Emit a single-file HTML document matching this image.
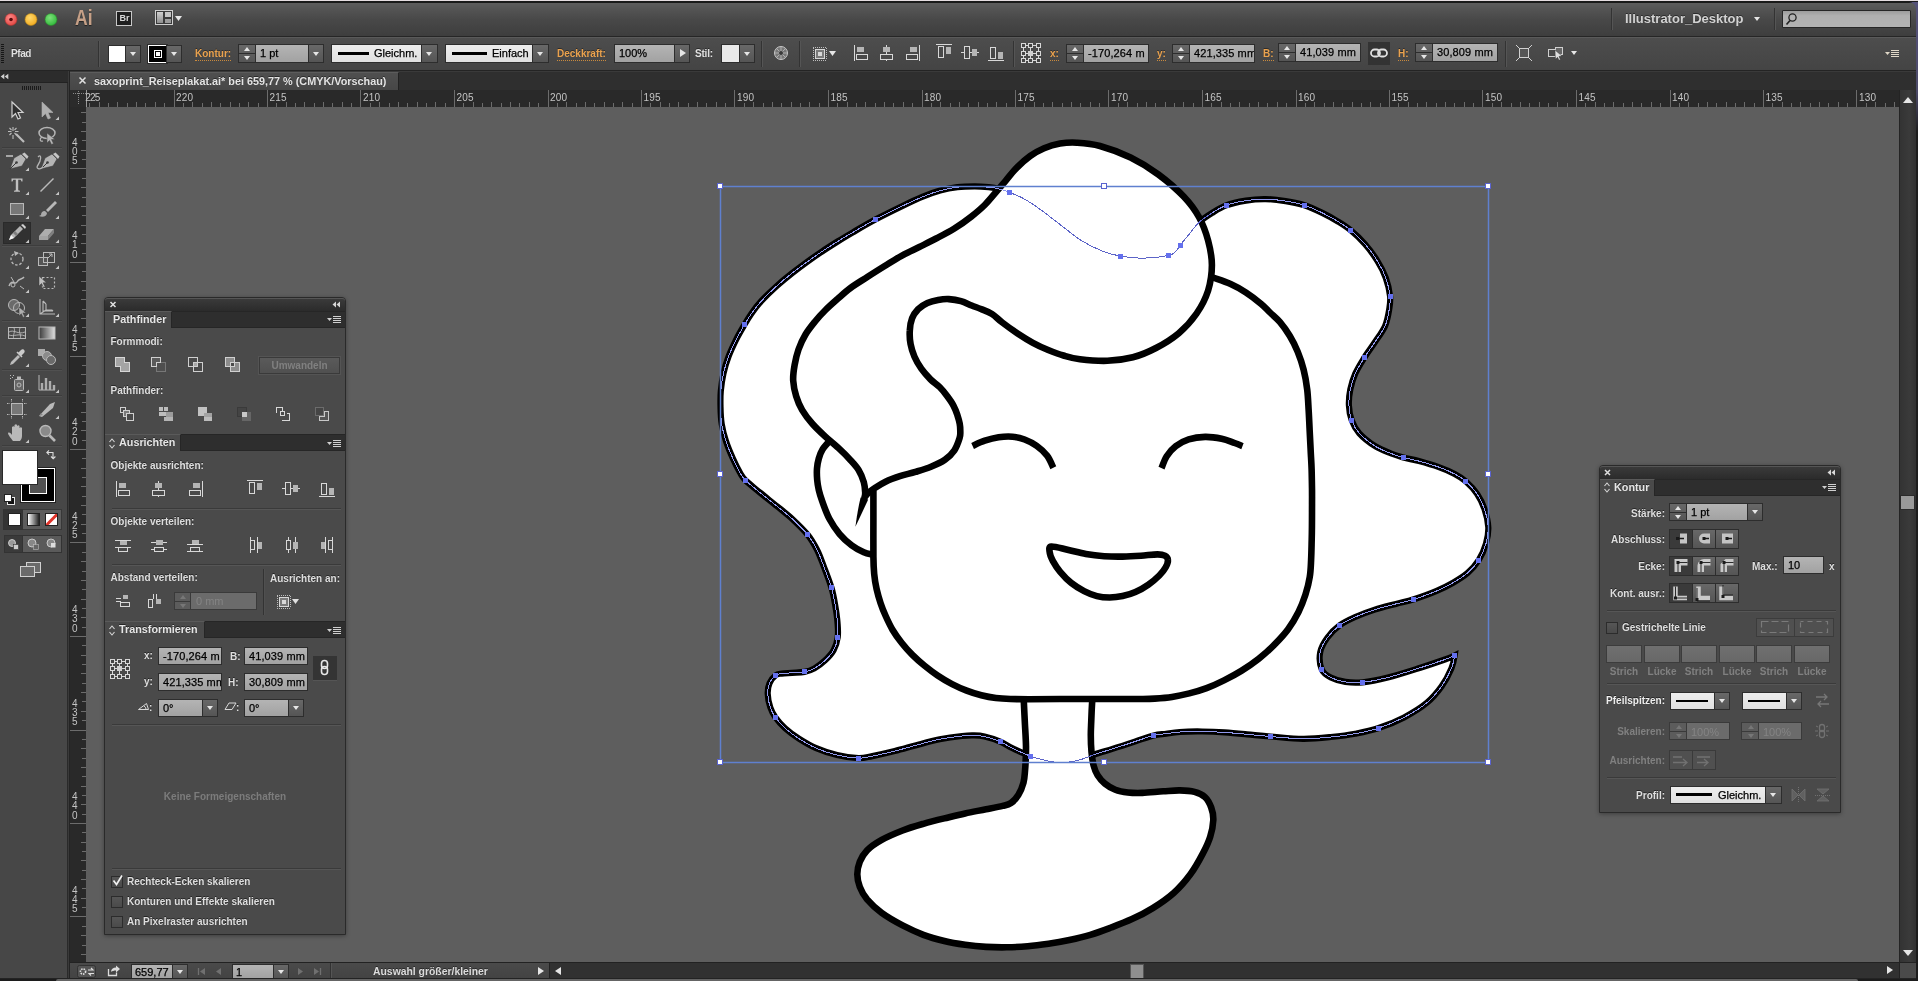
<!DOCTYPE html>
<html lang="de">
<head>
<meta charset="utf-8">
<title>saxoprint_Reiseplakat.ai* bei 659,77 % (CMYK/Vorschau)</title>
<style>
*{box-sizing:border-box;margin:0;padding:0}
html,body{width:1918px;height:981px;overflow:hidden;background:#5e5e5e}
body{position:relative;font-family:"Liberation Sans",sans-serif;font-size:11px;color:#dcdcdc;line-height:1;-webkit-font-smoothing:antialiased}
.abs{position:absolute}
#appbar{position:absolute;left:0;top:0;width:1918px;height:37px;background:linear-gradient(#e4dde0 0,#e4dde0 1px,#1a1a1a 1px,#1a1a1a 3px,#5d5d5d 3px,#555 8px,#484848 55%,#3e3e3e 100%);border-bottom:1px solid #262626}
#ctrl{position:absolute;left:0;top:37px;width:1918px;height:34px;background:linear-gradient(#4d4d4d,#444 100%);border-top:1px solid #5a5a5a;border-bottom:1px solid #242424}
#tabbar{position:absolute;left:70px;top:71px;width:1848px;height:19px;background:#2f2f2f;border-top:1px solid #3a3a3a}
#tab{position:absolute;left:0;top:0;width:329px;height:19px;background:linear-gradient(#4f4f4f,#464646);border-right:1px solid #222;border-top:1px solid #5c5c5c}
#hruler{position:absolute;left:70px;top:90px;width:1829px;height:17px;background:#292929;overflow:hidden}
#vruler{position:absolute;left:70px;top:107px;width:16px;height:855px;background:#292929;overflow:hidden}
#tools{position:absolute;left:0;top:71px;width:67px;height:910px;background:#474747}
#toolgap{position:absolute;left:67px;top:71px;width:3px;height:910px;background:#3a3a3a;border-left:1px solid #2a2a2a;border-right:1px solid #242424}
#canvas{position:absolute;left:86px;top:107px;width:1813px;height:855px;background:#5e5e5e;overflow:hidden}
#vscroll{position:absolute;left:1899px;top:90px;width:17px;height:872px;background:linear-gradient(90deg,#333,#3a3a3a 60%,#303030);border-left:1px solid #242424}
#status{position:absolute;left:70px;top:962px;width:1848px;height:19px;background:#313131;border-top:1px solid #222}
.lbl{position:absolute;white-space:nowrap;text-shadow:0 -1px 0 rgba(0,0,0,.45)}
.o{color:#eaa24e;font-weight:bold;font-size:10px;text-shadow:0 -1px 0 rgba(0,0,0,.4)}
.inp{position:absolute;height:18px;background:linear-gradient(#b4b4b4,#a2a2a2);border:1px solid #2d2d2d;color:#000;font-size:11px;line-height:16px;padding-left:4px;white-space:nowrap;overflow:hidden;text-shadow:none;-webkit-text-stroke:.25px #000}
.btn{position:absolute;height:18px;background:linear-gradient(#686868,#555);border:1px solid #2d2d2d}
.lite{position:absolute;height:18px;background:linear-gradient(#ededed,#e0e0e0);border:1px solid #2d2d2d;color:#000;font-size:11px;line-height:16px;white-space:nowrap;overflow:hidden;text-shadow:none;-webkit-text-stroke:.25px #000}
.tri{position:absolute;width:0;height:0;margin-left:1px;border-left:3px solid transparent;border-right:3px solid transparent;border-top:4px solid #e6e6e6}
.triu{position:absolute;width:0;height:0;margin-left:1px;border-left:3px solid transparent;border-right:3px solid transparent;border-bottom:4px solid #e6e6e6}
.trir{position:absolute;width:0;height:0;border-top:4px solid transparent;border-bottom:4px solid transparent;border-left:6px solid #e6e6e6}
.tril{position:absolute;width:0;height:0;border-top:4px solid transparent;border-bottom:4px solid transparent;border-right:6px solid #e6e6e6}
.vsep{position:absolute;width:2px;border-left:1px solid #333;border-right:1px solid #555}
.panel{position:absolute;background:#4a4a4a;border:1px solid #2a2a2a;box-shadow:0 1px 4px rgba(0,0,0,.35)}
.ptitle{position:absolute;left:0;right:0;height:17px;background:#2e2e2e;border-top:1px solid #262626;border-bottom:1px solid #262626}
.ptab{position:absolute;left:0;top:-1px;height:17px;background:#4a4a4a;border-right:1px solid #262626;border-top:1px solid #5a5a5a;font-weight:bold;font-size:10.800px;line-height:15px;color:#e6e6e6;white-space:nowrap;text-shadow:0 -1px 0 rgba(0,0,0,.5)}
.pl{position:absolute;font-weight:bold;font-size:10px;color:#dedede;white-space:nowrap;text-shadow:0 -1px 0 rgba(0,0,0,.5)}
.hsep{position:absolute;height:2px;border-top:1px solid #3a3a3a;border-bottom:1px solid #565656}
.cb{position:absolute;width:12px;height:12px;background:linear-gradient(#565656,#4a4a4a);border:1px solid #2c2c2c}
svg{position:absolute;overflow:visible}
</style>
</head>
<body>
<div id="root" style="position:absolute;left:0;top:0;width:1918px;height:981px;will-change:transform">
<div id="appbar"></div>
<div id="ctrl"></div>
<div id="tools"></div>
<div id="toolgap"></div>
<div id="tabbar"><div id="tab"></div></div>
<div id="hruler"></div>
<div id="vruler"></div>
<div id="canvas"></div>
<div id="vscroll"></div>
<div id="status"></div>

<!-- app bar text -->
<div class="lbl" style="left:75px;top:7px;font-size:22px;font-weight:bold;color:#c6a087;transform:scaleX(.8);transform-origin:0 0;text-shadow:0 1px 1px rgba(0,0,0,.5)">Ai</div>
<div class="abs" style="left:116px;top:11px;width:16px;height:15px;border:1px solid #c8c8c8;background:#1f1f1f"></div>
<div class="lbl" style="left:119.500px;top:14px;font-size:9px;font-weight:bold;color:#d6d6d6;letter-spacing:0;text-shadow:none">Br</div>
<div class="vsep" style="left:1611px;top:8px;height:22px"></div>
<div class="lbl" style="left:1625px;top:12px;font-size:13px;font-weight:bold;color:#d2d2d2">Illustrator_Desktop</div>
<div class="tri" style="left:1753px;top:17px;border-left-width:3px;border-right-width:3px"></div>
<div class="vsep" style="left:1774px;top:8px;height:22px"></div>
<div class="abs" style="left:1782px;top:10px;width:129px;height:18px;background:linear-gradient(#9c9c9c,#b0b0b0 30%,#b2b2b2);border:1px solid #262626;border-radius:1px"></div>

<!-- control bar text + fields -->
<div class="lbl" style="left:11px;top:49px;font-size:10px;font-weight:bold;letter-spacing:-.4px;color:#e0e0e0">Pfad</div>
<div class="vsep" style="left:98px;top:41px;height:26px"></div>
<div class="abs" style="left:108px;top:45px;width:18px;height:18px;background:#fff;border:1px solid #2d2d2d"></div>
<div class="btn" style="left:125px;top:45px;width:16px"></div><div class="tri" style="left:129px;top:52px"></div>
<div class="abs" style="left:148px;top:45px;width:19px;height:18px;background:#000;border:1px solid #fff;outline:1px solid #2d2d2d"></div>
<div class="abs" style="left:154px;top:50px;width:8px;height:8px;border:1px solid #fff"></div>
<div class="abs" style="left:156px;top:52px;width:4px;height:4px;background:#fff"></div>
<div class="btn" style="left:166px;top:45px;width:16px"></div><div class="tri" style="left:170px;top:52px"></div>

<div class="lbl o" style="left:195px;top:49px;border-bottom:1px dotted #c98a3e;padding-bottom:1px">Kontur:</div>
<div class="btn" style="left:238px;top:44px;width:18px;height:19px"></div>
<div class="abs" style="left:239px;top:53px;width:16px;height:1px;background:#2d2d2d"></div>
<div class="triu" style="left:243px;top:47px"></div><div class="tri" style="left:243px;top:56px"></div>
<div class="inp" style="left:255px;top:44px;width:54px;height:19px">1 pt</div>
<div class="btn" style="left:308px;top:44px;width:16px;height:19px"></div><div class="tri" style="left:312px;top:52px"></div>

<div class="lite" style="left:331px;top:44px;width:91px;height:19px;padding-left:42px">Gleichm.</div>
<div class="abs" style="left:338px;top:52px;width:31px;height:3px;background:#000"></div>
<div class="btn" style="left:421px;top:44px;width:17px;height:19px"></div><div class="tri" style="left:425px;top:52px"></div>
<div class="lite" style="left:445px;top:44px;width:88px;height:19px;padding-left:46px">Einfach</div>
<div class="abs" style="left:452px;top:52px;width:35px;height:3px;background:#000"></div>
<div class="btn" style="left:532px;top:44px;width:17px;height:19px"></div><div class="tri" style="left:536px;top:52px"></div>

<div class="lbl o" style="left:557px;top:49px;border-bottom:1px dotted #c98a3e;padding-bottom:1px">Deckkraft:</div>
<div class="inp" style="left:614px;top:44px;width:61px;height:19px">100%</div>
<div class="btn" style="left:674px;top:44px;width:16px;height:19px"></div><div class="trir" style="left:680px;top:49px"></div>
<div class="lbl" style="left:695px;top:49px;font-size:10px;font-weight:bold;letter-spacing:-.2px;color:#e0e0e0">Stil:</div>
<div class="abs" style="left:721px;top:44px;width:19px;height:19px;background:#e9e9e9;border:1px solid #2d2d2d"></div>
<div class="btn" style="left:739px;top:44px;width:16px;height:19px"></div><div class="tri" style="left:743px;top:52px"></div>
<div class="vsep" style="left:761px;top:41px;height:26px"></div>
<div class="vsep" style="left:799px;top:41px;height:26px"></div>
<div class="vsep" style="left:1013px;top:41px;height:26px"></div>

<div class="lbl o" style="left:1050px;top:49px;border-bottom:1px dotted #c98a3e;padding-bottom:1px">x:</div>
<div class="btn" style="left:1066px;top:44px;width:18px;height:19px"></div>
<div class="abs" style="left:1067px;top:53px;width:16px;height:1px;background:#2d2d2d"></div>
<div class="triu" style="left:1071px;top:47px"></div><div class="tri" style="left:1071px;top:56px"></div>
<div class="inp" style="left:1083px;top:44px;width:66px;height:19px;letter-spacing:.1px">-170,264 m</div>
<div class="lbl o" style="left:1157px;top:49px;border-bottom:1px dotted #c98a3e;padding-bottom:1px">y:</div>
<div class="btn" style="left:1172px;top:44px;width:18px;height:19px"></div>
<div class="abs" style="left:1173px;top:53px;width:16px;height:1px;background:#2d2d2d"></div>
<div class="triu" style="left:1177px;top:47px"></div><div class="tri" style="left:1177px;top:56px"></div>
<div class="inp" style="left:1189px;top:44px;width:66px;height:19px;letter-spacing:.1px">421,335 mm</div>
<div class="lbl o" style="left:1263px;top:49px;border-bottom:1px dotted #c98a3e;padding-bottom:1px">B:</div>
<div class="btn" style="left:1278px;top:43px;width:18px;height:19px"></div>
<div class="abs" style="left:1279px;top:52px;width:16px;height:1px;background:#2d2d2d"></div>
<div class="triu" style="left:1283px;top:46px"></div><div class="tri" style="left:1283px;top:55px"></div>
<div class="inp" style="left:1295px;top:43px;width:66px;height:19px;letter-spacing:.1px">41,039 mm</div>
<div class="abs" style="left:1368px;top:42px;width:22px;height:23px;background:#333"></div>
<div class="lbl o" style="left:1398px;top:49px;border-bottom:1px dotted #c98a3e;padding-bottom:1px">H:</div>
<div class="btn" style="left:1415px;top:43px;width:18px;height:19px"></div>
<div class="abs" style="left:1416px;top:52px;width:16px;height:1px;background:#2d2d2d"></div>
<div class="triu" style="left:1420px;top:46px"></div><div class="tri" style="left:1420px;top:55px"></div>
<div class="inp" style="left:1432px;top:43px;width:66px;height:19px;letter-spacing:.1px">30,809 mm</div>
<div class="vsep" style="left:1505px;top:41px;height:26px"></div>
<div class="tri" style="left:1570px;top:51px"></div>

<!-- tab -->
<div class="lbl" style="left:94px;top:76px;font-size:11px;font-weight:bold;color:#e4e4e4;transform:scaleX(.985);transform-origin:0 0">saxoprint_Reiseplakat.ai* bei 659,77 % (CMYK/Vorschau)</div>
<svg class="abs" style="left:0;top:0" width="1918" height="981" viewBox="0 0 1918 981">
<g shape-rendering="crispEdges">
<rect x="70" y="90" width="16" height="17" fill="#2b2b2b"/>
<path d="M72.5 93.5H86 M78.5 91V105" stroke="#8a8a8a" stroke-width="1" stroke-dasharray="1 1" fill="none"/>
<path d="M89.5 103V107 M99.5 102V107 M108.5 103V107 M117.5 102V107 M127.5 103V107 M136.5 102V107 M145.5 103V107 M155.5 102V107 M164.5 103V107 M174.5 90V107 M183.5 103V107 M192.5 102V107 M202.5 103V107 M211.5 102V107 M220.5 103V107 M230.5 102V107 M239.5 103V107 M248.5 102V107 M258.5 103V107 M267.5 90V107 M276.5 103V107 M286.5 102V107 M295.5 103V107 M304.5 102V107 M314.5 103V107 M323.5 102V107 M332.5 103V107 M342.5 102V107 M351.5 103V107 M360.5 90V107 M370.5 103V107 M379.5 102V107 M389.5 103V107 M398.5 102V107 M407.5 103V107 M417.5 102V107 M426.5 103V107 M435.5 102V107 M445.5 103V107 M454.5 90V107 M463.5 103V107 M473.5 102V107 M482.5 103V107 M491.5 102V107 M501.5 103V107 M510.5 102V107 M519.5 103V107 M529.5 102V107 M538.5 103V107 M548.5 90V107 M557.5 103V107 M566.5 102V107 M576.5 103V107 M585.5 102V107 M594.5 103V107 M604.5 102V107 M613.5 103V107 M622.5 102V107 M632.5 103V107 M641.5 90V107 M650.5 103V107 M660.5 102V107 M669.5 103V107 M678.5 102V107 M688.5 103V107 M697.5 102V107 M706.5 103V107 M716.5 102V107 M725.5 103V107 M734.5 90V107 M744.5 103V107 M753.5 102V107 M763.5 103V107 M772.5 102V107 M781.5 103V107 M791.5 102V107 M800.5 103V107 M809.5 102V107 M819.5 103V107 M828.5 90V107 M837.5 103V107 M847.5 102V107 M856.5 103V107 M865.5 102V107 M875.5 103V107 M884.5 102V107 M893.5 103V107 M903.5 102V107 M912.5 103V107 M922.5 90V107 M931.5 103V107 M940.5 102V107 M950.5 103V107 M959.5 102V107 M968.5 103V107 M978.5 102V107 M987.5 103V107 M996.5 102V107 M1006.5 103V107 M1015.5 90V107 M1024.5 103V107 M1034.5 102V107 M1043.5 103V107 M1052.5 102V107 M1062.5 103V107 M1071.5 102V107 M1080.5 103V107 M1090.5 102V107 M1099.5 103V107 M1108.5 90V107 M1118.5 103V107 M1127.5 102V107 M1137.5 103V107 M1146.5 102V107 M1155.5 103V107 M1165.5 102V107 M1174.5 103V107 M1183.5 102V107 M1193.5 103V107 M1202.5 90V107 M1211.5 103V107 M1221.5 102V107 M1230.5 103V107 M1239.5 102V107 M1249.5 103V107 M1258.5 102V107 M1267.5 103V107 M1277.5 102V107 M1286.5 103V107 M1296.5 90V107 M1305.5 103V107 M1314.5 102V107 M1324.5 103V107 M1333.5 102V107 M1342.5 103V107 M1352.5 102V107 M1361.5 103V107 M1370.5 102V107 M1380.5 103V107 M1389.5 90V107 M1398.5 103V107 M1408.5 102V107 M1417.5 103V107 M1426.5 102V107 M1436.5 103V107 M1445.5 102V107 M1454.5 103V107 M1464.5 102V107 M1473.5 103V107 M1482.5 90V107 M1492.5 103V107 M1501.5 102V107 M1511.5 103V107 M1520.5 102V107 M1529.5 103V107 M1539.5 102V107 M1548.5 103V107 M1557.5 102V107 M1567.5 103V107 M1576.5 90V107 M1585.5 103V107 M1595.5 102V107 M1604.5 103V107 M1613.5 102V107 M1623.5 103V107 M1632.5 102V107 M1641.5 103V107 M1651.5 102V107 M1660.5 103V107 M1670.5 90V107 M1679.5 103V107 M1688.5 102V107 M1698.5 103V107 M1707.5 102V107 M1716.5 103V107 M1726.5 102V107 M1735.5 103V107 M1744.5 102V107 M1754.5 103V107 M1763.5 90V107 M1772.5 103V107 M1782.5 102V107 M1791.5 103V107 M1800.5 102V107 M1810.5 103V107 M1819.5 102V107 M1828.5 103V107 M1838.5 102V107 M1847.5 103V107 M1856.5 90V107 M1866.5 103V107 M1875.5 102V107 M1885.5 103V107 M1894.5 102V107" stroke="#6c6c6c" stroke-width="1" fill="none"/>
<path d="M86.5 90V107" stroke="#9a9a9a" stroke-width="1"/>
<path d="M81 112.5H86 M82 122.5H86 M81 131.5H86 M82 140.5H86 M81 150.5H86 M82 159.5H86 M70 168.5H86 M82 178.5H86 M81 187.5H86 M82 197.5H86 M81 206.5H86 M82 215.5H86 M81 225.5H86 M82 234.5H86 M81 243.5H86 M82 253.5H86 M70 262.5H86 M82 271.5H86 M81 281.5H86 M82 290.5H86 M81 299.5H86 M82 309.5H86 M81 318.5H86 M82 327.5H86 M81 337.5H86 M82 346.5H86 M70 356.5H86 M82 365.5H86 M81 374.5H86 M82 384.5H86 M81 393.5H86 M82 402.5H86 M81 412.5H86 M82 421.5H86 M81 430.5H86 M82 440.5H86 M70 449.5H86 M82 458.5H86 M81 468.5H86 M82 477.5H86 M81 486.5H86 M82 496.5H86 M81 505.5H86 M82 514.5H86 M81 524.5H86 M82 533.5H86 M70 542.5H86 M82 552.5H86 M81 561.5H86 M82 571.5H86 M81 580.5H86 M82 589.5H86 M81 599.5H86 M82 608.5H86 M81 617.5H86 M82 627.5H86 M70 636.5H86 M82 645.5H86 M81 655.5H86 M82 664.5H86 M81 673.5H86 M82 683.5H86 M81 692.5H86 M82 701.5H86 M81 711.5H86 M82 720.5H86 M70 730.5H86 M82 739.5H86 M81 748.5H86 M82 758.5H86 M81 767.5H86 M82 776.5H86 M81 786.5H86 M82 795.5H86 M81 804.5H86 M82 814.5H86 M70 823.5H86 M82 832.5H86 M81 842.5H86 M82 851.5H86 M81 860.5H86 M82 870.5H86 M81 879.5H86 M82 888.5H86 M81 898.5H86 M82 907.5H86 M70 916.5H86 M82 926.5H86 M81 935.5H86 M82 945.5H86 M81 954.5H86" stroke="#6c6c6c" stroke-width="1" fill="none"/>
</g>
<g font-family="Liberation Sans, sans-serif" font-size="10" fill="#c4c4c4">
<clipPath id="hrc"><rect x="87" y="90" width="1812" height="17"/></clipPath>
<g clip-path="url(#hrc)">
</g><text x="85.3" y="101" textLength="15" lengthAdjust="spacing">225</text><g clip-path="url(#hrc)">
<text x="176.0" y="101" textLength="17" lengthAdjust="spacing">220</text>
<text x="269.5" y="101" textLength="17" lengthAdjust="spacing">215</text>
<text x="363.0" y="101" textLength="17" lengthAdjust="spacing">210</text>
<text x="456.5" y="101" textLength="17" lengthAdjust="spacing">205</text>
<text x="550.0" y="101" textLength="17" lengthAdjust="spacing">200</text>
<text x="643.5" y="101" textLength="17" lengthAdjust="spacing">195</text>
<text x="737.0" y="101" textLength="17" lengthAdjust="spacing">190</text>
<text x="830.5" y="101" textLength="17" lengthAdjust="spacing">185</text>
<text x="924.0" y="101" textLength="17" lengthAdjust="spacing">180</text>
<text x="1017.5" y="101" textLength="17" lengthAdjust="spacing">175</text>
<text x="1111.0" y="101" textLength="17" lengthAdjust="spacing">170</text>
<text x="1204.5" y="101" textLength="17" lengthAdjust="spacing">165</text>
<text x="1298.0" y="101" textLength="17" lengthAdjust="spacing">160</text>
<text x="1391.5" y="101" textLength="17" lengthAdjust="spacing">155</text>
<text x="1485.0" y="101" textLength="17" lengthAdjust="spacing">150</text>
<text x="1578.5" y="101" textLength="17" lengthAdjust="spacing">145</text>
<text x="1672.0" y="101" textLength="17" lengthAdjust="spacing">140</text>
<text x="1765.5" y="101" textLength="17" lengthAdjust="spacing">135</text>
<text x="1859.0" y="101" textLength="17" lengthAdjust="spacing">130</text>
</g>
<text x="74.8" y="145.6" text-anchor="middle">4</text>
<text x="74.8" y="154.9" text-anchor="middle">0</text>
<text x="74.8" y="164.2" text-anchor="middle">5</text>
<text x="74.8" y="239.1" text-anchor="middle">4</text>
<text x="74.8" y="248.4" text-anchor="middle">1</text>
<text x="74.8" y="257.7" text-anchor="middle">0</text>
<text x="74.8" y="332.6" text-anchor="middle">4</text>
<text x="74.8" y="341.9" text-anchor="middle">1</text>
<text x="74.8" y="351.2" text-anchor="middle">5</text>
<text x="74.8" y="426.1" text-anchor="middle">4</text>
<text x="74.8" y="435.4" text-anchor="middle">2</text>
<text x="74.8" y="444.7" text-anchor="middle">0</text>
<text x="74.8" y="519.6" text-anchor="middle">4</text>
<text x="74.8" y="528.9" text-anchor="middle">2</text>
<text x="74.8" y="538.2" text-anchor="middle">5</text>
<text x="74.8" y="613.1" text-anchor="middle">4</text>
<text x="74.8" y="622.4" text-anchor="middle">3</text>
<text x="74.8" y="631.7" text-anchor="middle">0</text>
<text x="74.8" y="706.6" text-anchor="middle">4</text>
<text x="74.8" y="715.9" text-anchor="middle">3</text>
<text x="74.8" y="725.2" text-anchor="middle">5</text>
<text x="74.8" y="800.1" text-anchor="middle">4</text>
<text x="74.8" y="809.4" text-anchor="middle">4</text>
<text x="74.8" y="818.7" text-anchor="middle">0</text>
<text x="74.8" y="893.6" text-anchor="middle">4</text>
<text x="74.8" y="902.9" text-anchor="middle">4</text>
<text x="74.8" y="912.2" text-anchor="middle">5</text>
</g>
</svg>
<svg class="abs" style="left:0;top:0" width="1918" height="981" viewBox="0 0 1918 981">
<clipPath id="cv"><rect x="86" y="107" width="1813" height="855"/></clipPath>
<g clip-path="url(#cv)" fill="#fff" stroke="#000" stroke-width="6.6" stroke-linejoin="round">
<path d="M1009.4 192.4C1013.4 194.0 1018.1 195.5 1023.3 198.4C1028.5 201.3 1034.5 205.3 1040.6 209.7C1046.7 214.0 1053.1 219.3 1060.0 224.5C1066.9 229.7 1074.9 236.5 1081.9 240.9C1089.0 245.3 1095.9 248.5 1102.3 251.0C1108.7 253.5 1113.4 254.9 1120.2 256.1C1127.0 257.3 1135.0 258.3 1143.1 258.2C1151.2 258.1 1163.1 256.6 1168.6 255.4C1174.1 254.2 1174.3 252.7 1176.2 251.0C1178.1 249.3 1177.9 248.2 1180.0 245.4C1182.1 242.7 1185.8 238.4 1189.0 234.5C1192.2 230.6 1195.3 225.8 1199.2 222.2C1203.1 218.6 1207.7 215.7 1212.2 212.9C1216.7 210.1 1220.5 207.5 1226.1 205.4C1231.7 203.3 1239.3 201.7 1245.9 200.6C1252.5 199.5 1259.1 199.0 1265.7 199.1C1272.3 199.2 1279.1 200.1 1285.6 201.1C1292.0 202.1 1298.3 203.2 1304.4 205.2C1310.5 207.2 1316.8 210.2 1322.3 212.9C1327.8 215.6 1332.9 218.4 1337.6 221.3C1342.3 224.2 1346.0 226.4 1350.6 230.2C1355.2 234.0 1360.6 239.1 1365.1 244.2C1369.6 249.3 1374.0 255.4 1377.4 261.0C1380.9 266.6 1383.7 272.0 1385.8 277.9C1387.9 283.8 1389.5 291.1 1390.1 296.5C1390.6 301.9 1389.9 305.1 1389.1 310.0C1388.3 314.9 1387.4 320.6 1385.1 325.9C1382.8 331.2 1378.7 336.5 1375.2 341.8C1371.7 347.1 1367.6 352.4 1364.3 357.7C1361.0 363.0 1357.6 368.3 1355.3 373.6C1353.0 378.9 1351.4 384.2 1350.3 389.5C1349.2 394.8 1348.7 400.3 1348.9 405.4C1349.1 410.5 1350.0 415.6 1351.7 420.3C1353.4 425.0 1355.4 429.0 1359.3 433.3C1363.2 437.6 1369.9 442.8 1375.2 446.2C1380.5 449.6 1386.4 451.6 1391.1 453.5C1395.8 455.4 1398.8 456.2 1403.4 457.5C1408.0 458.8 1413.0 459.5 1418.9 461.1C1424.8 462.7 1432.8 465.0 1438.8 467.1C1444.8 469.2 1450.2 471.6 1454.7 474.0C1459.2 476.4 1462.0 478.0 1465.7 481.3C1469.4 484.6 1473.9 489.2 1477.0 493.8C1480.1 498.4 1482.6 503.4 1484.5 509.0C1486.4 514.6 1488.0 521.5 1488.3 527.3C1488.5 533.1 1487.6 538.1 1486.0 543.6C1484.4 549.1 1481.8 555.3 1478.7 560.2C1475.7 565.1 1472.0 569.1 1467.7 572.9C1463.4 576.6 1458.3 579.7 1453.1 582.7C1447.9 585.7 1443.2 588.1 1436.7 590.9C1430.2 593.7 1420.7 597.1 1413.9 599.3C1407.1 601.5 1402.5 602.2 1396.0 603.9C1389.5 605.6 1381.6 607.4 1374.8 609.6C1368.0 611.8 1361.0 614.4 1355.2 617.0C1349.4 619.6 1344.3 621.9 1339.7 625.3C1335.1 628.7 1330.8 633.0 1327.5 637.5C1324.2 642.0 1321.2 646.9 1320.2 652.2C1319.2 657.6 1320.0 665.4 1321.8 669.6C1323.6 673.8 1326.9 675.5 1330.8 677.5C1334.7 679.5 1340.1 681.1 1345.4 681.9C1350.7 682.7 1355.5 683.0 1362.6 682.3C1369.7 681.6 1378.2 679.9 1387.8 677.5C1397.4 675.1 1410.9 670.7 1420.4 667.7C1429.9 664.7 1439.2 661.5 1444.9 659.5C1450.6 657.5 1454.7 655.4 1454.7 655.4C1454.7 655.4 1453.6 663.3 1451.4 668.5C1449.2 673.7 1445.7 680.7 1441.6 686.4C1437.5 692.1 1433.2 697.5 1427.0 702.7C1420.8 707.9 1412.3 713.1 1404.1 717.4C1395.9 721.7 1386.2 725.6 1378.0 728.3C1369.8 731.0 1363.1 732.2 1355.2 733.7C1347.3 735.2 1339.5 736.1 1330.8 737.0C1322.1 737.9 1313.1 738.9 1303.0 738.8C1292.9 738.7 1279.6 737.2 1270.3 736.5C1261.0 735.8 1254.6 735.0 1247.0 734.3C1239.4 733.6 1232.0 732.9 1224.5 732.4C1217.0 731.9 1209.6 731.6 1202.1 731.5C1194.6 731.4 1185.7 731.6 1179.7 732.0C1173.7 732.4 1170.5 733.1 1166.2 733.7C1161.9 734.3 1158.9 734.1 1153.7 735.4C1148.5 736.7 1141.7 739.4 1134.8 741.6C1127.9 743.9 1119.1 746.8 1112.4 748.9C1105.7 751.0 1099.7 752.7 1094.5 754.5C1089.3 756.3 1085.6 758.2 1081.0 759.5C1076.4 760.8 1071.0 761.8 1067.0 762.3C1063.0 762.8 1060.5 762.7 1057.0 762.4C1053.5 762.1 1050.7 761.6 1046.2 760.6C1041.8 759.6 1035.9 758.2 1030.3 756.1C1024.7 754.0 1017.6 750.7 1012.6 748.3C1007.6 745.9 1004.9 743.6 1000.2 741.6C995.5 739.6 989.0 737.5 984.5 736.5C980.0 735.5 977.0 735.5 973.3 735.4C969.6 735.3 967.7 735.4 962.1 736.0C956.5 736.6 947.2 737.8 939.7 739.3C932.2 740.8 924.8 742.9 917.3 744.9C909.8 746.9 902.3 749.2 894.8 751.1C887.3 753.0 878.5 754.9 872.4 756.1C866.3 757.3 864.3 758.4 858.4 758.2C852.5 758.0 844.0 756.8 837.0 755.1C830.0 753.4 822.6 751.0 816.2 748.2C809.9 745.5 804.1 741.9 798.9 738.6C793.7 735.3 789.0 731.7 785.1 728.2C781.2 724.7 778.0 721.0 775.5 717.5C773.0 714.0 771.6 711.4 770.3 707.4C769.0 703.4 767.8 697.6 767.7 693.6C767.6 689.6 768.2 686.2 769.5 683.2C770.8 680.2 773.5 677.0 775.5 675.4C777.5 673.8 778.9 674.0 781.6 673.6C784.4 673.2 788.2 673.1 792.0 672.8C795.8 672.5 800.8 672.6 804.5 671.9C808.2 671.2 811.1 670.3 814.5 668.4C817.9 666.5 821.7 663.6 824.9 660.6C828.1 657.6 831.5 654.2 833.6 650.3C835.7 646.4 837.1 641.9 837.7 637.3C838.4 632.7 837.9 627.9 837.5 622.5C837.1 617.1 836.2 611.0 835.2 605.2C834.2 599.4 833.3 593.9 831.4 587.5C829.5 581.1 826.4 573.3 824.0 567.0C821.6 560.7 819.8 555.1 817.0 549.7C814.2 544.3 811.5 539.5 807.5 534.5C803.5 529.5 797.8 524.1 792.8 519.4C787.8 514.7 782.7 510.9 777.2 506.4C771.7 501.9 765.2 496.9 759.9 492.5C754.6 488.1 748.7 483.6 745.4 480.3C742.1 477.0 742.0 476.1 739.9 472.5C737.8 468.9 735.2 463.8 732.9 458.6C730.6 453.4 727.9 447.1 726.0 441.3C724.1 435.5 722.6 429.8 721.7 424.0C720.8 418.2 720.6 412.1 720.5 406.6C720.4 401.1 720.3 396.5 720.8 391.0C721.3 385.5 722.1 379.5 723.4 373.7C724.7 367.9 726.4 362.2 728.6 356.4C730.8 350.6 733.7 344.5 736.4 339.1C739.1 333.8 742.2 328.6 744.7 324.3C747.2 320.0 748.8 317.4 751.5 313.5C754.2 309.6 757.0 305.8 761.2 301.2C765.4 296.6 771.4 290.8 776.5 286.2C781.6 281.6 786.6 277.5 791.7 273.5C796.8 269.5 801.9 265.7 807.0 262.0C812.1 258.3 817.2 254.7 822.3 251.3C827.4 247.9 832.5 244.7 837.6 241.5C842.7 238.3 846.6 236.0 852.9 232.3C859.2 228.6 867.2 223.8 875.4 219.5C883.6 215.2 894.1 210.0 902.0 206.2C909.9 202.4 916.4 199.3 922.8 196.7C929.1 194.1 934.3 192.2 940.1 190.6C945.9 189.0 951.6 187.9 957.4 187.2C963.2 186.5 969.6 186.4 974.8 186.4C980.0 186.4 984.6 186.8 988.6 187.2C992.6 187.6 995.5 188.0 999.0 188.9C1002.5 189.8 1005.4 190.8 1009.4 192.4Z" stroke-width="6.2" stroke-linejoin="miter"/>
<path d="M1023.8 701.0C1024.0 704.8 1024.5 716.1 1024.9 723.6C1025.3 731.1 1025.9 739.7 1026.0 746.1C1026.1 752.5 1025.8 757.9 1025.6 762.0C1025.4 766.1 1025.3 767.6 1025.0 771.0C1024.7 774.4 1024.6 778.5 1023.5 782.5C1022.4 786.5 1020.4 791.6 1018.3 795.0C1016.2 798.4 1013.6 801.2 1011.0 803.0C1008.4 804.8 1006.9 804.9 1002.7 805.9C998.5 806.9 992.3 808.0 986.0 809.2C979.7 810.5 972.1 811.9 965.1 813.4C958.1 814.9 951.2 816.7 944.3 818.4C937.3 820.1 930.3 821.8 923.4 823.8C916.5 825.8 909.5 827.8 902.6 830.5C895.7 833.2 887.6 836.6 881.7 839.9C875.8 843.2 870.8 846.6 867.1 850.3C863.5 853.9 861.4 857.8 859.8 861.8C858.2 865.8 857.3 870.1 857.3 874.3C857.3 878.5 858.2 882.6 859.8 886.8C861.4 891.0 863.5 894.9 867.1 899.3C870.8 903.6 875.8 908.5 881.7 912.9C887.6 917.2 895.7 921.8 902.6 925.4C909.5 929.0 916.5 932.2 923.4 934.8C930.3 937.4 937.3 939.3 944.3 941.0C951.2 942.7 958.1 943.8 965.1 944.8C972.1 945.8 979.0 946.5 986.0 946.9C993.0 947.3 999.8 947.4 1006.8 947.3C1013.8 947.2 1020.8 946.8 1027.7 946.2C1034.7 945.6 1041.5 944.7 1048.5 943.7C1055.5 942.7 1062.4 941.5 1069.4 940.0C1076.4 938.5 1083.3 936.9 1090.3 934.8C1097.2 932.7 1104.1 930.1 1111.1 927.5C1118.0 924.9 1125.0 922.3 1132.0 919.1C1139.0 915.9 1145.8 912.5 1152.8 908.1C1159.8 903.8 1167.4 898.6 1173.7 893.0C1180.0 887.4 1185.5 880.9 1190.4 874.3C1195.3 867.7 1199.6 859.7 1202.9 853.4C1206.2 847.1 1208.5 842.2 1210.2 836.7C1211.9 831.2 1213.1 825.0 1213.3 820.1C1213.5 815.2 1212.6 811.3 1211.2 807.5C1209.8 803.7 1207.8 799.7 1205.0 797.1C1202.2 794.5 1198.7 793.0 1194.5 791.9C1190.3 790.8 1185.1 790.5 1179.9 790.4C1174.7 790.3 1169.5 790.9 1163.3 791.3C1157.0 791.7 1148.3 792.7 1142.4 792.9C1136.5 793.1 1132.3 793.0 1127.8 792.5C1123.3 792.0 1119.1 791.3 1115.3 789.8C1111.5 788.3 1107.9 786.0 1104.9 783.6C1102.0 781.2 1099.5 778.2 1097.6 775.2C1095.7 772.2 1094.6 769.4 1093.6 765.5C1092.6 761.6 1092.0 757.1 1091.5 752.0C1091.0 746.9 1090.8 740.3 1090.8 735.0C1090.8 729.7 1091.1 725.7 1091.3 720.0C1091.5 714.3 1092.0 704.2 1092.2 701.0"/>
<path d="M829.5 441.0C828.3 442.4 824.3 446.6 822.5 449.5C820.7 452.4 819.7 455.3 818.8 458.5C817.9 461.7 817.3 464.9 817.0 468.5C816.7 472.1 816.9 476.4 817.2 480.0C817.5 483.6 818.0 486.5 818.8 490.0C819.6 493.5 820.5 496.4 822.2 501.2C823.9 505.9 826.3 513.0 829.2 518.5C832.1 524.0 835.9 529.6 839.6 534.1C843.4 538.6 847.7 542.4 851.7 545.4C855.7 548.4 860.3 550.8 863.8 552.3C867.3 553.8 871.0 554.2 872.5 554.6"/>
<path d="M1213.0 277.5C1215.9 278.6 1225.1 281.5 1230.6 284.0C1236.1 286.5 1240.8 289.1 1245.9 292.4C1251.0 295.7 1257.2 300.5 1261.2 303.9C1265.2 307.2 1266.9 309.5 1270.0 312.5C1273.1 315.5 1276.5 318.0 1279.8 321.9C1283.1 325.8 1286.7 330.8 1289.7 335.8C1292.7 340.8 1295.4 346.1 1297.7 351.7C1300.0 357.3 1302.0 363.3 1303.6 369.6C1305.2 375.9 1306.4 382.9 1307.2 389.5C1308.0 396.1 1308.2 402.8 1308.6 409.4C1309.0 416.0 1309.3 422.7 1309.6 429.3C1309.9 435.9 1310.3 442.6 1310.6 449.2C1310.9 455.8 1311.4 462.4 1311.6 469.0C1311.8 475.6 1311.9 481.6 1312.0 488.9C1312.1 496.2 1312.0 504.1 1312.0 512.6C1312.0 521.1 1311.9 532.1 1311.7 540.0C1311.5 547.9 1311.4 553.8 1311.1 560.0C1310.8 566.2 1310.7 571.5 1309.7 577.3C1308.8 583.1 1307.3 588.9 1305.4 594.7C1303.5 600.5 1301.4 606.2 1298.5 612.0C1295.6 617.8 1292.1 623.8 1288.1 629.3C1284.0 634.8 1279.1 640.0 1274.2 644.9C1269.3 649.8 1264.1 654.5 1258.6 658.8C1253.1 663.1 1247.1 667.3 1241.3 670.9C1235.5 674.5 1229.8 677.5 1224.0 680.4C1218.2 683.3 1212.4 686.0 1206.6 688.2C1200.8 690.4 1195.1 692.0 1189.3 693.4C1183.5 694.8 1177.8 696.0 1172.0 696.9C1166.2 697.8 1160.5 698.2 1154.7 698.6C1148.9 699.0 1146.4 698.9 1137.3 699.0C1128.2 699.1 1112.9 699.0 1100.0 699.0C1087.1 699.0 1071.8 699.0 1060.0 699.0C1048.2 699.0 1037.3 699.2 1029.0 699.2C1020.7 699.2 1015.9 699.2 1010.4 699.0C1004.9 698.8 1000.8 698.6 995.9 698.0C991.0 697.4 986.2 696.5 981.3 695.3C976.4 694.1 971.6 692.6 966.7 690.7C961.8 688.8 957.0 686.6 952.1 684.1C947.2 681.6 942.2 678.6 937.6 675.5C933.0 672.4 928.5 668.9 924.3 665.5C920.1 662.1 916.1 658.6 912.4 654.9C908.6 651.1 905.1 647.2 901.8 643.0C898.5 638.8 895.1 634.1 892.5 629.7C889.9 625.3 887.9 620.9 885.9 616.5C883.9 612.1 882.1 607.8 880.6 603.2C879.1 598.6 877.7 593.9 876.6 589.0C875.5 584.1 874.7 579.4 874.2 574.0C873.7 568.6 873.5 565.6 873.4 556.6C873.3 547.6 873.4 531.0 873.4 520.0C873.4 509.0 873.4 495.7 873.4 490.8"/>
<path d="M864.5 497.5C864.5 497.5 865.3 495.1 865.2 492.5C865.1 489.9 864.9 485.9 863.8 482.1C862.7 478.4 860.8 473.6 858.6 470.0C856.4 466.4 854.1 464.0 850.8 460.4C847.5 456.8 842.9 452.2 838.6 448.2C834.3 444.1 829.1 440.1 824.8 436.1C820.5 432.1 816.4 428.3 812.6 424.0C808.8 419.7 804.9 414.7 802.2 410.1C799.5 405.5 797.7 401.1 796.2 396.2C794.7 391.3 793.5 385.8 793.2 380.6C792.9 375.4 793.7 370.3 794.6 365.1C795.5 359.9 796.7 354.6 798.5 349.5C800.3 344.4 802.7 339.2 805.5 334.5C808.3 329.8 812.2 325.1 815.5 321.0C818.8 316.9 821.8 313.7 825.5 310.0C829.2 306.3 833.3 302.7 837.5 299.0C841.7 295.3 845.5 291.7 850.5 288.0C855.5 284.3 861.6 280.7 867.3 277.0C873.0 273.3 878.9 269.6 884.7 266.0C890.5 262.4 896.2 258.8 902.0 255.6C907.8 252.4 913.5 249.9 919.3 247.0C925.1 244.1 930.8 241.3 936.6 238.3C942.4 235.3 948.2 232.4 954.0 228.8C959.8 225.2 966.1 220.7 971.3 216.6C976.5 212.5 980.9 208.8 985.2 204.5C989.5 200.2 993.8 194.6 997.3 190.6C1000.8 186.6 1002.8 184.1 1006.0 180.3C1009.2 176.6 1012.4 172.2 1016.4 168.1C1020.4 164.0 1025.6 159.3 1030.2 156.0C1034.8 152.7 1039.1 150.3 1044.1 148.2C1049.1 146.1 1054.5 144.5 1060.0 143.6C1065.5 142.7 1070.1 142.3 1076.8 142.7C1083.5 143.1 1091.0 143.5 1100.0 146.0C1109.0 148.5 1120.9 152.8 1130.6 157.5C1140.3 162.2 1149.5 167.9 1158.4 174.5C1167.3 181.1 1177.1 189.6 1183.9 196.8C1190.7 204.0 1195.2 210.2 1199.2 217.5C1203.2 224.8 1206.0 232.6 1208.1 240.5C1210.2 248.4 1211.9 256.8 1211.9 265.1C1211.9 273.5 1210.6 282.5 1208.1 290.6C1205.5 298.7 1201.5 306.4 1196.6 313.5C1191.7 320.6 1185.6 327.4 1178.8 333.2C1172.0 338.9 1163.7 344.0 1156.0 348.0C1148.3 352.0 1141.0 355.2 1132.9 357.3C1124.8 359.4 1116.2 360.5 1107.4 360.8C1098.6 361.1 1087.3 360.1 1080.0 359.2C1072.7 358.3 1068.8 357.0 1063.5 355.5C1058.2 354.0 1053.3 352.1 1048.2 350.0C1043.1 347.9 1038.0 345.6 1032.9 342.8C1027.8 340.1 1022.7 336.9 1017.6 333.5C1012.5 330.1 1006.6 325.8 1002.3 322.5C998.0 319.2 995.6 316.2 992.0 314.0C988.4 311.8 984.3 310.4 980.9 309.0C977.5 307.6 975.0 306.8 971.7 305.5C968.4 304.2 964.8 302.2 961.0 301.1C957.2 300.0 952.6 299.3 948.8 299.1C945.0 298.9 941.7 299.3 938.1 299.9C934.5 300.5 930.7 301.4 927.4 302.9C924.1 304.4 920.8 306.6 918.2 309.1C915.7 311.7 913.5 314.6 912.1 318.2C910.7 321.8 910.0 326.2 909.8 330.5C909.5 334.8 909.8 339.9 910.6 344.2C911.4 348.5 912.6 352.4 914.4 356.5C916.2 360.6 918.6 364.9 921.3 368.7C924.0 372.5 927.5 376.3 930.5 379.4C933.5 382.4 936.8 384.2 939.6 387.0C942.4 389.8 945.0 393.1 947.3 396.2C949.6 399.3 951.8 402.3 953.4 405.4C955.0 408.4 956.2 411.4 957.2 414.5C958.2 417.6 959.2 420.9 959.7 423.7C960.2 426.4 960.3 428.6 960.3 431.0C960.3 433.4 960.6 434.9 959.6 438.1C958.6 441.3 956.9 446.7 954.4 450.3C951.9 453.9 948.8 457.1 944.9 459.8C941.0 462.5 935.9 464.7 931.0 466.7C926.1 468.7 920.6 470.3 915.4 471.9C910.2 473.5 904.8 474.6 899.9 476.2C895.0 477.8 890.0 479.5 886.0 481.4C882.0 483.3 878.5 485.6 875.6 487.5C872.7 489.4 870.6 491.0 868.7 492.7C866.9 494.4 864.5 497.5 864.5 497.5Z"/>
<path d="M860.6 497.500Q857.300 511.500 855.400 526.800Q861 515 868.200 499.500Z" fill="#000" stroke="none"/>
<path d="M972.6 445.9C974.6 445.0 980.5 442.1 984.8 440.7C989.1 439.3 994.0 438.0 998.6 437.3C1003.2 436.6 1008.2 436.3 1012.5 436.7C1016.8 437.1 1020.6 438.0 1024.6 439.5C1028.6 441.0 1032.9 443.2 1036.7 445.9C1040.5 448.6 1044.4 452.1 1047.2 455.8C1050.0 459.5 1052.3 465.8 1053.3 467.8" fill="none"/>
<path d="M1161.5 468.1C1162.4 466.1 1164.3 459.9 1166.7 456.2C1169.1 452.5 1172.1 448.9 1175.8 446.1C1179.5 443.3 1183.8 440.8 1188.7 439.3C1193.6 437.8 1199.7 437.0 1205.2 436.9C1210.7 436.8 1216.8 437.8 1221.7 438.8C1226.6 439.8 1231.1 441.8 1234.6 443.0C1238.1 444.2 1241.2 445.6 1242.5 446.1" fill="none"/>
<path d="M1051.4 546.5C1054.4 546.2 1061.8 548.5 1067.5 549.8C1073.2 551.0 1079.8 552.9 1085.9 554.0C1092.0 555.1 1098.1 555.8 1104.2 556.2C1110.3 556.6 1116.5 556.7 1122.6 556.6C1128.7 556.5 1135.2 556.1 1141.0 555.7C1146.8 555.3 1153.5 554.4 1157.5 554.4C1161.5 554.4 1163.1 554.8 1164.8 555.7C1166.5 556.6 1167.8 558.0 1167.9 559.9C1168.1 561.8 1167.1 564.7 1165.7 567.3C1164.3 569.9 1162.2 572.6 1159.3 575.5C1156.4 578.4 1152.3 582.0 1148.3 584.7C1144.3 587.5 1139.7 590.1 1135.4 592.0C1131.1 593.9 1126.9 595.2 1122.6 596.1C1118.3 597.0 1114.0 597.5 1109.7 597.5C1105.4 597.5 1101.2 597.2 1096.9 596.1C1092.6 595.0 1088.4 593.3 1084.1 591.1C1079.8 588.9 1075.2 586.1 1071.2 582.9C1067.2 579.7 1063.3 575.5 1060.2 571.8C1057.1 568.1 1054.6 564.1 1052.8 560.8C1051.0 557.4 1049.8 554.1 1049.6 551.7C1049.4 549.3 1048.4 546.8 1051.4 546.5Z"/>
<path d="M1009.4 192.4C1013.4 194.0 1018.1 195.5 1023.3 198.4C1028.5 201.3 1034.5 205.3 1040.6 209.7C1046.7 214.0 1053.1 219.3 1060.0 224.5C1066.9 229.7 1074.9 236.5 1081.9 240.9C1089.0 245.3 1095.9 248.5 1102.3 251.0C1108.7 253.5 1113.4 254.9 1120.2 256.1C1127.0 257.3 1135.0 258.3 1143.1 258.2C1151.2 258.1 1163.1 256.6 1168.6 255.4C1174.1 254.2 1174.3 252.7 1176.2 251.0C1178.1 249.3 1177.9 248.2 1180.0 245.4C1182.1 242.7 1185.8 238.4 1189.0 234.5C1192.2 230.6 1195.3 225.8 1199.2 222.2C1203.1 218.6 1207.7 215.7 1212.2 212.9C1216.7 210.1 1220.5 207.5 1226.1 205.4C1231.7 203.3 1239.3 201.7 1245.9 200.6C1252.5 199.5 1259.1 199.0 1265.7 199.1C1272.3 199.2 1279.1 200.1 1285.6 201.1C1292.0 202.1 1298.3 203.2 1304.4 205.2C1310.5 207.2 1316.8 210.2 1322.3 212.9C1327.8 215.6 1332.9 218.4 1337.6 221.3C1342.3 224.2 1346.0 226.4 1350.6 230.2C1355.2 234.0 1360.6 239.1 1365.1 244.2C1369.6 249.3 1374.0 255.4 1377.4 261.0C1380.9 266.6 1383.7 272.0 1385.8 277.9C1387.9 283.8 1389.5 291.1 1390.1 296.5C1390.6 301.9 1389.9 305.1 1389.1 310.0C1388.3 314.9 1387.4 320.6 1385.1 325.9C1382.8 331.2 1378.7 336.5 1375.2 341.8C1371.7 347.1 1367.6 352.4 1364.3 357.7C1361.0 363.0 1357.6 368.3 1355.3 373.6C1353.0 378.9 1351.4 384.2 1350.3 389.5C1349.2 394.8 1348.7 400.3 1348.9 405.4C1349.1 410.5 1350.0 415.6 1351.7 420.3C1353.4 425.0 1355.4 429.0 1359.3 433.3C1363.2 437.6 1369.9 442.8 1375.2 446.2C1380.5 449.6 1386.4 451.6 1391.1 453.5C1395.8 455.4 1398.8 456.2 1403.4 457.5C1408.0 458.8 1413.0 459.5 1418.9 461.1C1424.8 462.7 1432.8 465.0 1438.8 467.1C1444.8 469.2 1450.2 471.6 1454.7 474.0C1459.2 476.4 1462.0 478.0 1465.7 481.3C1469.4 484.6 1473.9 489.2 1477.0 493.8C1480.1 498.4 1482.6 503.4 1484.5 509.0C1486.4 514.6 1488.0 521.5 1488.3 527.3C1488.5 533.1 1487.6 538.1 1486.0 543.6C1484.4 549.1 1481.8 555.3 1478.7 560.2C1475.7 565.1 1472.0 569.1 1467.7 572.9C1463.4 576.6 1458.3 579.7 1453.1 582.7C1447.9 585.7 1443.2 588.1 1436.7 590.9C1430.2 593.7 1420.7 597.1 1413.9 599.3C1407.1 601.5 1402.5 602.2 1396.0 603.9C1389.5 605.6 1381.6 607.4 1374.8 609.6C1368.0 611.8 1361.0 614.4 1355.2 617.0C1349.4 619.6 1344.3 621.9 1339.7 625.3C1335.1 628.7 1330.8 633.0 1327.5 637.5C1324.2 642.0 1321.2 646.9 1320.2 652.2C1319.2 657.6 1320.0 665.4 1321.8 669.6C1323.6 673.8 1326.9 675.5 1330.8 677.5C1334.7 679.5 1340.1 681.1 1345.4 681.9C1350.7 682.7 1355.5 683.0 1362.6 682.3C1369.7 681.6 1378.2 679.9 1387.8 677.5C1397.4 675.1 1410.9 670.7 1420.4 667.7C1429.9 664.7 1439.2 661.5 1444.9 659.5C1450.6 657.5 1454.7 655.4 1454.7 655.4C1454.7 655.4 1453.6 663.3 1451.4 668.5C1449.2 673.7 1445.7 680.7 1441.6 686.4C1437.5 692.1 1433.2 697.5 1427.0 702.7C1420.8 707.9 1412.3 713.1 1404.1 717.4C1395.9 721.7 1386.2 725.6 1378.0 728.3C1369.8 731.0 1363.1 732.2 1355.2 733.7C1347.3 735.2 1339.5 736.1 1330.8 737.0C1322.1 737.9 1313.1 738.9 1303.0 738.8C1292.9 738.7 1279.6 737.2 1270.3 736.5C1261.0 735.8 1254.6 735.0 1247.0 734.3C1239.4 733.6 1232.0 732.9 1224.5 732.4C1217.0 731.9 1209.6 731.6 1202.1 731.5C1194.6 731.4 1185.7 731.6 1179.7 732.0C1173.7 732.4 1170.5 733.1 1166.2 733.7C1161.9 734.3 1158.9 734.1 1153.7 735.4C1148.5 736.7 1141.7 739.4 1134.8 741.6C1127.9 743.9 1119.1 746.8 1112.4 748.9C1105.7 751.0 1099.7 752.7 1094.5 754.5C1089.3 756.3 1085.6 758.2 1081.0 759.5C1076.4 760.8 1071.0 761.8 1067.0 762.3C1063.0 762.8 1060.5 762.7 1057.0 762.4C1053.5 762.1 1050.7 761.6 1046.2 760.6C1041.8 759.6 1035.9 758.2 1030.3 756.1C1024.7 754.0 1017.6 750.7 1012.6 748.3C1007.6 745.9 1004.9 743.6 1000.2 741.6C995.5 739.6 989.0 737.5 984.5 736.5C980.0 735.5 977.0 735.5 973.3 735.4C969.6 735.3 967.7 735.4 962.1 736.0C956.5 736.6 947.2 737.8 939.7 739.3C932.2 740.8 924.8 742.9 917.3 744.9C909.8 746.9 902.3 749.2 894.8 751.1C887.3 753.0 878.5 754.9 872.4 756.1C866.3 757.3 864.3 758.4 858.4 758.2C852.5 758.0 844.0 756.8 837.0 755.1C830.0 753.4 822.6 751.0 816.2 748.2C809.9 745.5 804.1 741.9 798.9 738.6C793.7 735.3 789.0 731.7 785.1 728.2C781.2 724.7 778.0 721.0 775.5 717.5C773.0 714.0 771.6 711.4 770.3 707.4C769.0 703.4 767.8 697.6 767.7 693.6C767.6 689.6 768.2 686.2 769.5 683.2C770.8 680.2 773.5 677.0 775.5 675.4C777.5 673.8 778.9 674.0 781.6 673.6C784.4 673.2 788.2 673.1 792.0 672.8C795.8 672.5 800.8 672.6 804.5 671.9C808.2 671.2 811.1 670.3 814.5 668.4C817.9 666.5 821.7 663.6 824.9 660.6C828.1 657.6 831.5 654.2 833.6 650.3C835.7 646.4 837.1 641.9 837.7 637.3C838.4 632.7 837.9 627.9 837.5 622.5C837.1 617.1 836.2 611.0 835.2 605.2C834.2 599.4 833.3 593.9 831.4 587.5C829.5 581.1 826.4 573.3 824.0 567.0C821.6 560.7 819.8 555.1 817.0 549.7C814.2 544.3 811.5 539.5 807.5 534.5C803.5 529.5 797.8 524.1 792.8 519.4C787.8 514.7 782.7 510.9 777.2 506.4C771.7 501.9 765.2 496.9 759.9 492.5C754.6 488.1 748.7 483.6 745.4 480.3C742.1 477.0 742.0 476.1 739.9 472.5C737.8 468.9 735.2 463.8 732.9 458.6C730.6 453.4 727.9 447.1 726.0 441.3C724.1 435.5 722.6 429.8 721.7 424.0C720.8 418.2 720.6 412.1 720.5 406.6C720.4 401.1 720.3 396.5 720.8 391.0C721.3 385.5 722.1 379.5 723.4 373.7C724.7 367.9 726.4 362.2 728.6 356.4C730.8 350.6 733.7 344.5 736.4 339.1C739.1 333.8 742.2 328.6 744.7 324.3C747.2 320.0 748.8 317.4 751.5 313.5C754.2 309.6 757.0 305.8 761.2 301.2C765.4 296.6 771.4 290.8 776.5 286.2C781.6 281.6 786.6 277.5 791.7 273.5C796.8 269.5 801.9 265.7 807.0 262.0C812.1 258.3 817.2 254.7 822.3 251.3C827.4 247.9 832.5 244.7 837.6 241.5C842.7 238.3 846.6 236.0 852.9 232.3C859.2 228.6 867.2 223.8 875.4 219.5C883.6 215.2 894.1 210.0 902.0 206.2C909.9 202.4 916.4 199.3 922.8 196.7C929.1 194.1 934.3 192.2 940.1 190.6C945.9 189.0 951.6 187.9 957.4 187.2C963.2 186.5 969.6 186.4 974.8 186.4C980.0 186.4 984.6 186.8 988.6 187.2C992.6 187.6 995.5 188.0 999.0 188.9C1002.5 189.8 1005.4 190.8 1009.4 192.4Z" fill="none" stroke="#9098ec" stroke-width="1" stroke-linejoin="miter" shape-rendering="crispEdges"/>
<path d="M1009.4 192.4C1013.4 194.0 1018.1 195.5 1023.3 198.4C1028.5 201.3 1034.5 205.3 1040.6 209.7C1046.7 214.0 1053.1 219.3 1060.0 224.5C1066.9 229.7 1074.9 236.5 1081.9 240.9C1089.0 245.3 1095.9 248.5 1102.3 251.0C1108.7 253.5 1113.4 254.9 1120.2 256.1C1127.0 257.3 1135.0 258.3 1143.1 258.2C1151.2 258.1 1163.1 256.6 1168.6 255.4C1174.1 254.2 1174.3 252.7 1176.2 251.0C1178.1 249.3 1177.9 248.2 1180.0 245.4C1182.1 242.7 1185.8 238.4 1189.0 234.5C1192.2 230.6 1195.3 225.8 1199.2 222.2C1203.1 218.6 1207.7 215.7 1212.2 212.9" fill="none" stroke="#5c64c8" stroke-width="1" shape-rendering="crispEdges"/>
<path d="M1094.5 754.5C1089.3 756.3 1085.6 758.2 1081.0 759.5C1076.4 760.8 1071.0 761.8 1067.0 762.3C1063.0 762.8 1060.5 762.7 1057.0 762.4C1053.5 762.1 1050.7 761.6 1046.2 760.6C1041.8 759.6 1035.9 758.2 1030.3 756.1" fill="none" stroke="#5c64c8" stroke-width="1" shape-rendering="crispEdges"/>
<rect x="720.5" y="186.5" width="768" height="576" fill="none" stroke="#5f80cf" stroke-width="1.5"/>
<path d="M1007 190h5v5h-5zM873 217h5v5h-5zM742 322h5v5h-5zM743 478h5v5h-5zM805 532h5v5h-5zM829 585h5v5h-5zM835 635h5v5h-5zM802 669h5v5h-5zM773 673h5v5h-5zM773 715h5v5h-5zM856 756h5v5h-5zM998 739h5v5h-5zM1028 754h5v5h-5zM1151 733h5v5h-5zM1268 734h5v5h-5zM1376 726h5v5h-5zM1452 653h5v5h-5zM1360 680h5v5h-5zM1319 667h5v5h-5zM1337 623h5v5h-5zM1411 597h5v5h-5zM1476 558h5v5h-5zM1463 479h5v5h-5zM1401 455h5v5h-5zM1349 418h5v5h-5zM1362 355h5v5h-5zM1388 294h5v5h-5zM1348 228h5v5h-5zM1302 203h5v5h-5zM1224 203h5v5h-5zM1178 243h5v5h-5zM1166 253h5v5h-5zM1118 254h5v5h-5z" fill="#6470ee" stroke="none" shape-rendering="crispEdges"/>
<path d="M717.5 183.5h5v5h-5zM1101.5 183.5h5v5h-5zM1485.5 183.5h5v5h-5zM717.5 471.5h5v5h-5zM1485.5 471.5h5v5h-5zM717.5 759.5h5v5h-5zM1101.5 759.5h5v5h-5zM1485.5 759.5h5v5h-5z" fill="#fff" stroke="#5a63cf" stroke-width="1" shape-rendering="crispEdges"/>
</g></svg>
<!-- left panel group: Pathfinder / Ausrichten / Transformieren -->
<div class="panel" style="left:104px;top:297px;width:242px;height:638px;border-radius:4px 4px 0 0">
  <div class="abs" style="left:0;top:0;width:240px;height:13px;background:linear-gradient(#3a3a3a,#2b2b2b);border-radius:3px 3px 0 0;border-top:1px solid #555"></div>
  <div class="ptitle" style="top:13px"><div class="ptab" style="width:67px;padding-left:8px">Pathfinder</div></div>
  <div class="pl" style="left:5.500px;top:39px">Formmodi:</div>
  <div class="abs" style="left:154px;top:59px;width:81px;height:17px;border:1px solid #3a3a3a;background:linear-gradient(#5a5a5a,#505050);box-shadow:0 0 0 1px rgba(255,255,255,.06)"></div>
  <div class="pl" style="left:154px;top:63px;width:81px;text-align:center;color:#808080;text-shadow:none">Umwandeln</div>
  <div class="pl" style="left:5.500px;top:88px">Pathfinder:</div>

  <div class="ptitle" style="top:136px"><div class="ptab" style="width:76px;padding-left:14px">Ausrichten</div></div>
  <div class="pl" style="left:5.500px;top:163px">Objekte ausrichten:</div>
  <div class="hsep" style="left:7px;top:210px;width:229px"></div>
  <div class="pl" style="left:5.500px;top:219px">Objekte verteilen:</div>
  <div class="hsep" style="left:7px;top:266px;width:229px"></div>
  <div class="pl" style="left:5.500px;top:275px">Abstand verteilen:</div>
  <div class="pl" style="left:165px;top:276px">Ausrichten an:</div>
  <div class="vsep" style="left:158px;top:271px;height:46px;border-right-color:#505050"></div>
  <div class="abs" style="left:69px;top:294px;width:83px;height:18px;background:#6b6b6b;border:1px solid #3a3a3a"></div>
  <div class="abs" style="left:69px;top:294px;width:17px;height:18px;background:#5c5c5c;border:1px solid #3a3a3a"></div>
  <div class="abs" style="left:70px;top:303px;width:15px;height:1px;background:#3a3a3a"></div>
  <div class="triu" style="left:74px;top:297px;border-bottom-color:#777"></div>
  <div class="tri" style="left:74px;top:306px;border-top-color:#777"></div>
  <div class="pl" style="left:91px;top:298px;font-weight:normal;font-size:11px;color:#848484;text-shadow:none">0 mm</div>

  <div class="ptitle" style="top:323px"><div class="ptab" style="width:100px;padding-left:14px">Transformieren</div></div>
  <div class="pl" style="left:39px;top:353px">x:</div>
  <div class="inp" style="left:53px;top:349px;width:64px;letter-spacing:.1px">-170,264 m</div>
  <div class="pl" style="left:125px;top:354px">B:</div>
  <div class="inp" style="left:139px;top:349px;width:64px;letter-spacing:.1px">41,039 mm</div>
  <div class="pl" style="left:39px;top:379px">y:</div>
  <div class="inp" style="left:53px;top:375px;width:64px;letter-spacing:.1px">421,335 mm</div>
  <div class="pl" style="left:123px;top:380px">H:</div>
  <div class="inp" style="left:139px;top:375px;width:64px;letter-spacing:.1px">30,809 mm</div>
  <div class="abs" style="left:208px;top:358px;width:24px;height:25px;background:#343434;border-bottom:1px solid #555"></div>
  <div class="pl" style="left:44px;top:405px">:</div>
  <div class="inp" style="left:53px;top:401px;width:45px">0°</div>
  <div class="btn" style="left:97px;top:401px;width:16px"></div><div class="tri" style="left:101px;top:408px"></div>
  <div class="pl" style="left:131px;top:405px">:</div>
  <div class="inp" style="left:139px;top:401px;width:45px">0°</div>
  <div class="btn" style="left:183px;top:401px;width:16px"></div><div class="tri" style="left:187px;top:408px"></div>
  <div class="hsep" style="left:7px;top:426px;width:229px"></div>
  <div class="pl" style="left:0;top:494px;width:240px;text-align:center;color:#7c7c7c;text-shadow:none">Keine Formeigenschaften</div>
  <div class="hsep" style="left:7px;top:570px;width:229px"></div>
  <div class="cb" style="left:6px;top:578px"></div>
  <div class="pl" style="left:22px;top:579px">Rechteck-Ecken skalieren</div>
  <div class="cb" style="left:6px;top:598px"></div>
  <div class="pl" style="left:22px;top:599px">Konturen und Effekte skalieren</div>
  <div class="cb" style="left:6px;top:618px"></div>
  <div class="pl" style="left:22px;top:619px">An Pixelraster ausrichten</div>
</div>
<!-- right panel: Kontur -->
<div class="panel" style="left:1599px;top:465px;width:242px;height:348px;border-radius:4px 4px 0 0">
  <div class="abs" style="left:0;top:0;width:240px;height:13px;background:linear-gradient(#3a3a3a,#2b2b2b);border-radius:3px 3px 0 0;border-top:1px solid #555"></div>
  <div class="ptitle" style="top:13px"><div class="ptab" style="width:55px;padding-left:14px">Kontur</div></div>
  <div class="pl" style="left:0;top:43px;width:65px;text-align:right">Stärke:</div>
  <div class="btn" style="left:69px;top:37px;width:18px;height:18px"></div>
  <div class="abs" style="left:70px;top:46px;width:16px;height:1px;background:#2d2d2d"></div>
  <div class="triu" style="left:74px;top:40px"></div><div class="tri" style="left:74px;top:49px"></div>
  <div class="inp" style="left:86px;top:37px;width:62px">1 pt</div>
  <div class="btn" style="left:147px;top:37px;width:16px"></div><div class="tri" style="left:151px;top:44px"></div>

  <div class="pl" style="left:0;top:69px;width:65px;text-align:right">Abschluss:</div>
  <div class="btn" style="left:69px;top:63px;width:24px;height:20px;background:#3a3a3a"></div>
  <div class="btn" style="left:92px;top:63px;width:24px;height:20px"></div>
  <div class="btn" style="left:115px;top:63px;width:24px;height:20px"></div>
  <div class="pl" style="left:0;top:96px;width:65px;text-align:right">Ecke:</div>
  <div class="btn" style="left:69px;top:90px;width:24px;height:20px;background:#3a3a3a"></div>
  <div class="btn" style="left:92px;top:90px;width:24px;height:20px"></div>
  <div class="btn" style="left:115px;top:90px;width:24px;height:20px"></div>
  <div class="pl" style="left:152px;top:96px">Max.:</div>
  <div class="inp" style="left:183px;top:90px;width:41px;height:18px">10</div>
  <div class="pl" style="left:229px;top:96px">x</div>
  <div class="pl" style="left:0;top:123px;width:65px;text-align:right">Kont. ausr.:</div>
  <div class="btn" style="left:69px;top:117px;width:24px;height:20px;background:#3a3a3a"></div>
  <div class="btn" style="left:92px;top:117px;width:24px;height:20px"></div>
  <div class="btn" style="left:115px;top:117px;width:24px;height:20px"></div>
  <div class="hsep" style="left:7px;top:144px;width:229px"></div>
  <div class="cb" style="left:6px;top:156px"></div>
  <div class="pl" style="left:22px;top:157px">Gestrichelte Linie</div>
  <div class="abs" style="left:156px;top:152px;width:39px;height:19px;border:1px solid #3c3c3c;background:#505050"></div>
  <div class="abs" style="left:194px;top:152px;width:40px;height:19px;border:1px solid #3c3c3c;background:#505050"></div>
  <div class="abs" style="left:6px;top:179px;width:36px;height:18px;background:linear-gradient(#707070,#686868);border:1px solid #3c3c3c"></div>
  <div class="abs" style="left:44px;top:179px;width:36px;height:18px;background:linear-gradient(#707070,#686868);border:1px solid #3c3c3c"></div>
  <div class="abs" style="left:81px;top:179px;width:36px;height:18px;background:linear-gradient(#707070,#686868);border:1px solid #3c3c3c"></div>
  <div class="abs" style="left:119px;top:179px;width:36px;height:18px;background:linear-gradient(#707070,#686868);border:1px solid #3c3c3c"></div>
  <div class="abs" style="left:156px;top:179px;width:36px;height:18px;background:linear-gradient(#707070,#686868);border:1px solid #3c3c3c"></div>
  <div class="abs" style="left:194px;top:179px;width:36px;height:18px;background:linear-gradient(#707070,#686868);border:1px solid #3c3c3c"></div>
  <div class="pl" style="left:6px;top:201px;width:36px;text-align:center;color:#808080;text-shadow:none">Strich</div>
  <div class="pl" style="left:44px;top:201px;width:36px;text-align:center;color:#808080;text-shadow:none">Lücke</div>
  <div class="pl" style="left:81px;top:201px;width:36px;text-align:center;color:#808080;text-shadow:none">Strich</div>
  <div class="pl" style="left:119px;top:201px;width:36px;text-align:center;color:#808080;text-shadow:none">Lücke</div>
  <div class="pl" style="left:156px;top:201px;width:36px;text-align:center;color:#808080;text-shadow:none">Strich</div>
  <div class="pl" style="left:194px;top:201px;width:36px;text-align:center;color:#808080;text-shadow:none">Lücke</div>
  <div class="hsep" style="left:7px;top:217px;width:229px"></div>
  <div class="pl" style="left:0;top:230px;width:65px;text-align:right;color:#eee">Pfeilspitzen:</div>
  <div class="lite" style="left:70px;top:226px;width:45px;height:18px"></div>
  <div class="abs" style="left:76px;top:234px;width:32px;height:2px;background:#000"></div>
  <div class="btn" style="left:114px;top:226px;width:16px"></div><div class="tri" style="left:118px;top:233px"></div>
  <div class="lite" style="left:142px;top:226px;width:45px;height:18px"></div>
  <div class="abs" style="left:148px;top:234px;width:32px;height:2px;background:#000"></div>
  <div class="btn" style="left:186px;top:226px;width:16px"></div><div class="tri" style="left:190px;top:233px"></div>
  <div class="pl" style="left:0;top:261px;width:65px;text-align:right;color:#808080;text-shadow:none">Skalieren:</div>
  <div class="abs" style="left:69px;top:256px;width:61px;height:18px;background:#6b6b6b;border:1px solid #3a3a3a"></div>
  <div class="abs" style="left:69px;top:256px;width:18px;height:18px;background:#5c5c5c;border:1px solid #3a3a3a"></div>
  <div class="abs" style="left:70px;top:265px;width:16px;height:1px;background:#3a3a3a"></div>
  <div class="triu" style="left:75px;top:259px;border-bottom-color:#777"></div>
  <div class="tri" style="left:75px;top:268px;border-top-color:#777"></div>
  <div class="pl" style="left:91px;top:261px;font-weight:normal;font-size:11px;color:#848484;text-shadow:none">100%</div>
  <div class="abs" style="left:141px;top:256px;width:61px;height:18px;background:#6b6b6b;border:1px solid #3a3a3a"></div>
  <div class="abs" style="left:141px;top:256px;width:18px;height:18px;background:#5c5c5c;border:1px solid #3a3a3a"></div>
  <div class="abs" style="left:142px;top:265px;width:16px;height:1px;background:#3a3a3a"></div>
  <div class="triu" style="left:147px;top:259px;border-bottom-color:#777"></div>
  <div class="tri" style="left:147px;top:268px;border-top-color:#777"></div>
  <div class="pl" style="left:163px;top:261px;font-weight:normal;font-size:11px;color:#848484;text-shadow:none">100%</div>
  <div class="pl" style="left:0;top:290px;width:65px;text-align:right;color:#808080;text-shadow:none">Ausrichten:</div>
  <div class="abs" style="left:69px;top:284px;width:24px;height:20px;border:1px solid #3a3a3a;background:#505050"></div>
  <div class="abs" style="left:92px;top:284px;width:24px;height:20px;border:1px solid #3a3a3a;background:#505050"></div>
  <div class="hsep" style="left:7px;top:311px;width:229px"></div>
  <div class="pl" style="left:0;top:325px;width:65px;text-align:right">Profil:</div>
  <div class="lite" style="left:70px;top:320px;width:96px;height:18px;padding-left:47px">Gleichm.</div>
  <div class="abs" style="left:76px;top:327px;width:36px;height:3px;background:#000"></div>
  <div class="btn" style="left:165px;top:320px;width:17px"></div><div class="tri" style="left:169px;top:327px"></div>
</div>
<svg class="abs" style="left:0;top:0" width="1918" height="981" viewBox="0 0 1918 981" fill="none" stroke="none">
<defs><linearGradient id="gg" x1="0" y1="0" x2="0" y2="1"><stop offset="0" stop-color="#cfcfcf"/><stop offset="1" stop-color="#8f8f8f"/></linearGradient><linearGradient id="gh" x1="0" y1="0" x2="1" y2="0"><stop offset="0" stop-color="#fff"/><stop offset="1" stop-color="#222"/></linearGradient><radialGradient id="gr" cx=".4" cy=".35" r=".7"><stop offset="0" stop-color="#ff8a8a"/><stop offset="1" stop-color="#e0443e"/></radialGradient><radialGradient id="gy" cx=".4" cy=".35" r=".7"><stop offset="0" stop-color="#ffd86a"/><stop offset="1" stop-color="#f0a91e"/></radialGradient><radialGradient id="gn" cx=".4" cy=".35" r=".7"><stop offset="0" stop-color="#7ee07a"/><stop offset="1" stop-color="#2fb83a"/></radialGradient></defs>
<circle cx="11" cy="19.5" r="6" fill="url(#gr)" stroke="#a33" stroke-width=".6"/><circle cx="11" cy="19.5" r="1.8" fill="#5a0a0a"/>
<circle cx="31" cy="19.5" r="6" fill="url(#gy)" stroke="#b8861a" stroke-width=".6"/>
<circle cx="51" cy="19.5" r="6" fill="url(#gn)" stroke="#2a8a2a" stroke-width=".6"/>
<g shape-rendering="crispEdges"><rect x="155.5" y="10.5" width="17" height="14" fill="#3a3a3a" stroke="#cfcfcf"/><rect x="157" y="12" width="6" height="11" fill="url(#gg)"/><rect x="165" y="12" width="6" height="5" fill="#c4c4c4"/><rect x="165" y="19" width="6" height="4" fill="#9c9c9c"/></g>
<path d="M175 16h7l-3.5 5z" fill="#e6e6e6"/>
<circle cx="1792.5" cy="17.5" r="3.6" stroke="#222" stroke-width="1.3"/><path d="M1790 20.5l-3.5 4" stroke="#222" stroke-width="1.6"/>
<path d="M1 44.500h3M1 46.500h3M1 48.500h3M1 50.500h3M1 52.500h3M1 54.500h3M1 56.500h3M1 58.500h3M1 60.500h3M1 62.500h3" stroke="#161616" stroke-width="1" shape-rendering="crispEdges"/>
<path d="M79.5 77.5l6 6M85.5 77.5l-6 6" stroke="#e0e0e0" stroke-width="1.5"/>
<circle cx="781" cy="53" r="6.5" fill="#777" stroke="#c8c8c8" stroke-width="1"/><path d="M781 46.5v13M774.5 53h13M776.5 48.5l9 9M785.5 48.5l-9 9" stroke="#bdbdbd" stroke-width=".8"/><circle cx="781" cy="53" r="2" fill="#3a3a3a"/>
<g transform="translate(819.5 53.5)" shape-rendering="crispEdges"><rect x="-6.5" y="-6.5" width="13" height="13" stroke="#bdbdbd" stroke-dasharray="1 1" /><rect x="-4.5" y="-4.5" width="9" height="9" fill="#7a7a7a" stroke="#d8d8d8"/><rect x="-2" y="-2" width="4" height="4" fill="#d8d8d8"/></g>
<path d="M829 51h7l-3.5 5z" fill="#e6e6e6"/>
<g transform="translate(861 53)" shape-rendering="crispEdges"><path d="M-6.5 -8v16" stroke="#d8d8d8"/><rect x="-4" y="-6" width="7" height="5" fill="#b5b5b5"/><rect x="-4.5" y="1.5" width="11" height="5" stroke="#d8d8d8"/></g>
<g transform="translate(886 53)" shape-rendering="crispEdges"><path d="M.5 -8v16" stroke="#d8d8d8"/><rect x="-3" y="-6" width="7" height="5" fill="#b5b5b5"/><rect x="-5.5" y="1.5" width="12" height="5" fill="#4a4a4a" stroke="#d8d8d8"/></g>
<g transform="translate(913 53)" shape-rendering="crispEdges"><path d="M6.5 -8v16" stroke="#d8d8d8"/><rect x="-3" y="-6" width="7" height="5" fill="#b5b5b5"/><rect x="-6.5" y="1.5" width="11" height="5" stroke="#d8d8d8"/></g>
<g transform="translate(944 52)" shape-rendering="crispEdges"><path d="M-8 -7.5h16" stroke="#d8d8d8"/><rect x="-5.5" y="-5.5" width="5" height="11" stroke="#d8d8d8"/><rect x="2" y="-5" width="5" height="7" fill="#b5b5b5"/></g>
<g transform="translate(970 52)" shape-rendering="crispEdges"><path d="M-9 .5h18" stroke="#d8d8d8"/><rect x="-5.5" y="-5.5" width="5" height="12" fill="#4a4a4a" stroke="#d8d8d8"/><rect x="2" y="-3" width="5" height="7" fill="#b5b5b5"/></g>
<g transform="translate(996 53)" shape-rendering="crispEdges"><path d="M-8 7.5h16" stroke="#d8d8d8"/><rect x="-5.5" y="-5.5" width="5" height="11" stroke="#d8d8d8"/><rect x="2" y="-1" width="5" height="7" fill="#b5b5b5"/></g>
<g transform="translate(1030.5 53)" shape-rendering="crispEdges"><path d="M-7.5 -7.5h15v15h-15zM0 -7.5v15M-7.5 0h15" stroke="#d8d8d8" transform="scale(1.0)"/><rect x="-9.5" y="-9.5" width="4" height="4" fill="#444" stroke="#d8d8d8"/><rect x="-9.5" y="-2.0" width="4" height="4" fill="#444" stroke="#d8d8d8"/><rect x="-9.5" y="5.5" width="4" height="4" fill="#444" stroke="#d8d8d8"/><rect x="-2.0" y="-9.5" width="4" height="4" fill="#444" stroke="#d8d8d8"/><rect x="-2.5" y="-2.5" width="5" height="5" fill="#cfcfcf"/><rect x="-2.0" y="5.5" width="4" height="4" fill="#444" stroke="#d8d8d8"/><rect x="5.5" y="-9.5" width="4" height="4" fill="#444" stroke="#d8d8d8"/><rect x="5.5" y="-2.0" width="4" height="4" fill="#444" stroke="#d8d8d8"/><rect x="5.5" y="5.5" width="4" height="4" fill="#444" stroke="#d8d8d8"/></g>
<g stroke="#e0e0e0" stroke-width="1.8" fill="none"><rect x="1371" y="49.5" width="9" height="7" rx="3.5"/><rect x="1378" y="49.5" width="9" height="7" rx="3.5"/></g>
<g stroke="#d0d0d0" shape-rendering="crispEdges"><rect x="1519.5" y="48.5" width="9" height="9" fill="#555"/><path d="M1516 45l3 3M1532 45l-3 3M1516 61l3-3M1532 61l-3-3" /></g>
<g shape-rendering="crispEdges"><rect x="1548.500" y="49.5" width="7" height="7" stroke="#d0d0d0"/><rect x="1555.500" y="47.5" width="7" height="7" stroke="#d0d0d0" fill="#666"/></g><path d="M1555 50l7 6-3 .5 1.500 3-1.500 .8-1.500-3-2 2z" fill="#e0e0e0" stroke="#333" stroke-width=".5"/>
<g transform="translate(1892 53.5)" ><path d="M-7 -1.500h5l-2.500 3z" fill="#e0d8c8"/><path d="M-1 -3.500h8M-1 -1.500h8M-1 .5h8M-1 2.500h8" stroke="#e0d8c8" stroke-width="1" shape-rendering="crispEdges"/></g>
<path d="M110.5 302.0l5 5M115.5 302.0l-5 5" stroke="#e0e0e0" stroke-width="1.5"/>
<path d="M336 301.5v6l-3.500-3zM340 301.5v6l-3.500-3z" fill="#d8d8d8"/>
<path d="M1605.0 470.0l5 5M1610.0 470.0l-5 5" stroke="#e0e0e0" stroke-width="1.5"/>
<path d="M1831 469.5v6l-3.500-3zM1835 469.5v6l-3.500-3z" fill="#d8d8d8"/>
<g transform="translate(334 319.5)" ><path d="M-7 -1.500h5l-2.500 3z" fill="#d0d0d0"/><path d="M-1 -3.500h8M-1 -1.500h8M-1 .5h8M-1 2.500h8" stroke="#d0d0d0" stroke-width="1" shape-rendering="crispEdges"/></g>
<g transform="translate(334 443.5)" ><path d="M-7 -1.500h5l-2.500 3z" fill="#d0d0d0"/><path d="M-1 -3.500h8M-1 -1.500h8M-1 .5h8M-1 2.500h8" stroke="#d0d0d0" stroke-width="1" shape-rendering="crispEdges"/></g>
<g transform="translate(334 630.5)" ><path d="M-7 -1.500h5l-2.500 3z" fill="#d0d0d0"/><path d="M-1 -3.500h8M-1 -1.500h8M-1 .5h8M-1 2.500h8" stroke="#d0d0d0" stroke-width="1" shape-rendering="crispEdges"/></g>
<g transform="translate(1829 487.5)" ><path d="M-7 -1.500h5l-2.500 3z" fill="#d0d0d0"/><path d="M-1 -3.500h8M-1 -1.500h8M-1 .5h8M-1 2.500h8" stroke="#d0d0d0" stroke-width="1" shape-rendering="crispEdges"/></g>
<path d="M109.5 442.0l2.500-3 2.500 3M109.5 445.0l2.500 3 2.500-3" stroke="#d8d8d8" stroke-width="1.100" fill="none"/>
<path d="M109.5 629.0l2.500-3 2.500 3M109.5 632.0l2.500 3 2.500-3" stroke="#d8d8d8" stroke-width="1.100" fill="none"/>
<path d="M1604.5 486.0l2.500-3 2.500 3M1604.5 489.0l2.500 3 2.500-3" stroke="#d8d8d8" stroke-width="1.100" fill="none"/>
<g transform="translate(122 364)" shape-rendering="crispEdges"><path d="M-6.500 -6.500h9v5h5v9h-9v-5h-5z" fill="#a4a4a4" stroke="#d6d6d6"/></g>
<g transform="translate(158 364)" shape-rendering="crispEdges"><rect x="-1.500" y="-1.500" width="9" height="9" stroke="#777" fill="#4f4f4f"/><path d="M-6.500 -6.500h9v5h-4v4h-5z" fill="#5a5a5a" stroke="#d0d0d0"/></g>
<g transform="translate(195 364)" shape-rendering="crispEdges"><rect x="-6.500" y="-6.500" width="9" height="9" stroke="#d0d0d0"/><rect x="-1.500" y="-1.500" width="9" height="9" stroke="#d0d0d0"/><rect x="-1" y="-1" width="3" height="3" fill="#a8a8a8"/></g>
<g transform="translate(232 364)" shape-rendering="crispEdges"><rect x="-6.500" y="-6.500" width="9" height="9" stroke="#d0d0d0" fill="#8c8c8c"/><rect x="-1.500" y="-1.500" width="9" height="9" stroke="#d0d0d0" fill="#8c8c8c"/><rect x="-1.500" y="-1.500" width="4" height="4" fill="#4a4a4a" stroke="#d0d0d0"/></g>
<g transform="translate(127 414)" shape-rendering="crispEdges"><rect x="-6.500" y="-6.500" width="5" height="5" stroke="#d0d0d0"/><rect x="-3.500" y="-3.500" width="6" height="6" stroke="#d0d0d0" fill="#7a7a7a"/><rect x="-.5" y="-.5" width="7" height="7" stroke="#d0d0d0" fill="#4a4a4a"/><path d="M2 6h4v-4" stroke="#d0d0d0" /></g>
<g transform="translate(166 414)" shape-rendering="crispEdges"><rect x="-7" y="-7" width="4" height="4" fill="#bdbdbd"/><rect x="-2" y="-7" width="4" height="4" fill="#bdbdbd"/><rect x="-7" y="-2" width="9" height="4" fill="#bdbdbd"/><rect x="0" y="-2" width="7" height="9" fill="#9c9c9c"/><rect x="-2" y="3" width="9" height="4" fill="#b4b4b4"/></g>
<g transform="translate(205 414)" shape-rendering="crispEdges"><rect x="-7" y="-7" width="9" height="9" fill="#c2c2c2"/><rect x="-1" y="-1" width="8" height="8" fill="#a2a2a2"/><rect x="-1" y="3" width="8" height="4" fill="#bcbcbc"/></g>
<g transform="translate(244 414)" shape-rendering="crispEdges"><rect x="-7" y="-7" width="9" height="9" fill="#444" stroke="#3a3a3a"/><rect x="-2" y="-2" width="9" height="9" fill="#666"/><rect x="-2" y="-2" width="5" height="5" fill="#c8c8c8"/></g>
<g transform="translate(283 414)" shape-rendering="crispEdges"><path d="M-6.500 -1.500v-5h6v3M-1.500 6.500h8v-7h-3M-2.500 -2.500h4v4h-4z" stroke="#d8d8d8"/></g>
<g transform="translate(322 414)" shape-rendering="crispEdges"><rect x="-6.500" y="-6.500" width="8" height="8" stroke="#6c6c6c" fill="#454545"/><path d="M2.500 -2.500h4v9h-9v-4h5z" stroke="#c8c8c8" fill="#555"/></g>
<g transform="translate(123 489)" shape-rendering="crispEdges"><path d="M-6.5 -8v16" stroke="#d8d8d8"/><rect x="-4" y="-6" width="7" height="5" fill="#b5b5b5"/><rect x="-4.5" y="1.5" width="11" height="5" stroke="#d8d8d8"/></g>
<g transform="translate(158 489)" shape-rendering="crispEdges"><path d="M.5 -8v16" stroke="#d8d8d8"/><rect x="-3" y="-6" width="7" height="5" fill="#b5b5b5"/><rect x="-5.5" y="1.5" width="12" height="5" fill="#4a4a4a" stroke="#d8d8d8"/></g>
<g transform="translate(196 489)" shape-rendering="crispEdges"><path d="M6.5 -8v16" stroke="#d8d8d8"/><rect x="-3" y="-6" width="7" height="5" fill="#b5b5b5"/><rect x="-6.5" y="1.5" width="11" height="5" stroke="#d8d8d8"/></g>
<g transform="translate(255 488)" shape-rendering="crispEdges"><path d="M-8 -7.5h16" stroke="#d8d8d8"/><rect x="-5.5" y="-5.5" width="5" height="11" stroke="#d8d8d8"/><rect x="2" y="-5" width="5" height="7" fill="#b5b5b5"/></g>
<g transform="translate(291 488)" shape-rendering="crispEdges"><path d="M-9 .5h18" stroke="#d8d8d8"/><rect x="-5.5" y="-5.5" width="5" height="12" fill="#4a4a4a" stroke="#d8d8d8"/><rect x="2" y="-3" width="5" height="7" fill="#b5b5b5"/></g>
<g transform="translate(327 489)" shape-rendering="crispEdges"><path d="M-8 7.5h16" stroke="#d8d8d8"/><rect x="-5.5" y="-5.5" width="5" height="11" stroke="#d8d8d8"/><rect x="2" y="-1" width="5" height="7" fill="#b5b5b5"/></g>
<g transform="translate(123 545)" shape-rendering="crispEdges"><path d="M-8 -4.500h16M-8 2.500h16" stroke="#d8d8d8"/><rect x="-3" y="-4" width="7" height="4" fill="#b5b5b5"/><rect x="-4.500" y="2.500" width="9" height="4" fill="#4a4a4a" stroke="#d8d8d8"/></g>
<g transform="translate(159 545)" shape-rendering="crispEdges"><path d="M-8 -2.500h16M-8 4.500h16" stroke="#d8d8d8"/><rect x="-3" y="-5" width="7" height="5" fill="#b5b5b5"/><rect x="-4.500" y="2.500" width="9" height="4" fill="#4a4a4a" stroke="#d8d8d8"/></g>
<g transform="translate(195 545)" shape-rendering="crispEdges"><path d="M-8 -.5h16M-8 6.500h16" stroke="#d8d8d8"/><rect x="-3" y="-5" width="7" height="4" fill="#b5b5b5"/><rect x="-4.500" y="2.500" width="9" height="4" fill="#4a4a4a" stroke="#d8d8d8"/></g>
<g transform="translate(256 545)" shape-rendering="crispEdges"><path d="M-5.500 -8v16M1.500 -8v16" stroke="#d8d8d8"/><rect x="-5.500" y="-4.500" width="4" height="9" fill="#4a4a4a" stroke="#d8d8d8"/><rect x="2" y="-3" width="4" height="7" fill="#b5b5b5"/></g>
<g transform="translate(292 545)" shape-rendering="crispEdges"><path d="M-3.500 -8v16M3.500 -8v16" stroke="#d8d8d8"/><rect x="-5.500" y="-4.500" width="4" height="9" fill="#4a4a4a" stroke="#d8d8d8"/><rect x="1" y="-3" width="5" height="7" fill="#b5b5b5"/></g>
<g transform="translate(326 545)" shape-rendering="crispEdges"><path d="M-.5 -8v16M6.500 -8v16" stroke="#d8d8d8"/><rect x="2.500" y="-4.500" width="4" height="9" fill="#4a4a4a" stroke="#d8d8d8"/><rect x="-5" y="-3" width="4" height="7" fill="#b5b5b5"/></g>
<g transform="translate(123 601)" shape-rendering="crispEdges"><rect x="0" y="-6" width="5" height="4" fill="#b5b5b5"/><rect x="-2.500" y="1.500" width="9" height="4" stroke="#d8d8d8"/><path d="M-7 -2.500h5M-7 .5h5" stroke="#d8d8d8"/></g>
<g transform="translate(154 601)" shape-rendering="crispEdges"><rect x="-5.500" y="-1.500" width="4" height="8" stroke="#d8d8d8"/><rect x="2" y="-2" width="5" height="5" fill="#b5b5b5"/><path d="M-.5 -7v5M2.500 -7v5" stroke="#d8d8d8"/></g>
<g transform="translate(283.5 601.5)" shape-rendering="crispEdges"><rect x="-6.5" y="-6.5" width="13" height="13" stroke="#bdbdbd" stroke-dasharray="1 1" /><rect x="-4.5" y="-4.5" width="9" height="9" fill="#7a7a7a" stroke="#d8d8d8"/><rect x="-2" y="-2" width="4" height="4" fill="#d8d8d8"/></g>
<path d="M292 599h7l-3.500 5z" fill="#e0e0e0"/>
<g transform="translate(119.5 668.5)" shape-rendering="crispEdges"><path d="M-7.5 -7.5h15v15h-15zM0 -7.5v15M-7.5 0h15" stroke="#d8d8d8" transform="scale(1.0)"/><rect x="-9.5" y="-9.5" width="4" height="4" fill="#444" stroke="#d8d8d8"/><rect x="-9.5" y="-2.0" width="4" height="4" fill="#444" stroke="#d8d8d8"/><rect x="-9.5" y="5.5" width="4" height="4" fill="#444" stroke="#d8d8d8"/><rect x="-2.0" y="-9.5" width="4" height="4" fill="#444" stroke="#d8d8d8"/><rect x="-2.5" y="-2.5" width="5" height="5" fill="#cfcfcf"/><rect x="-2.0" y="5.5" width="4" height="4" fill="#444" stroke="#d8d8d8"/><rect x="5.5" y="-9.5" width="4" height="4" fill="#444" stroke="#d8d8d8"/><rect x="5.5" y="-2.0" width="4" height="4" fill="#444" stroke="#d8d8d8"/><rect x="5.5" y="5.5" width="4" height="4" fill="#444" stroke="#d8d8d8"/></g>
<g stroke="#e6e6e6" stroke-width="1.600" fill="none"><rect x="321.500" y="660.500" width="6" height="8" rx="3"/><rect x="321.500" y="666.500" width="6" height="8" rx="3"/></g>
<path d="M138.500 709.500h10l-2-6z M146 709a4 4 0 0 0-2-3" stroke="#d8d8d8" stroke-width="1" fill="none" transform="translate(0 0)"/>
<path d="M225 709.500h7l4-6.500h-7z" stroke="#d8d8d8" stroke-width="1" fill="none"/>
<path d="M113.500 880.500l3 4 5.500-9" stroke="#f0f0f0" stroke-width="1.700" fill="none"/>
<g transform="translate(1681 538.5)" ><rect x="-1" y="-5" width="7" height="10" fill="#c4c4c4"/><path d="M-4 0h7" stroke="#1a1a1a" stroke-width="1.500"/><rect x="-5" y="-1.500" width="3" height="3" fill="#1a1a1a"/></g>
<g transform="translate(1704 538.5)" ><path d="M6 -5h-6a5 5 0 0 0 0 10h6z" fill="#c4c4c4"/><path d="M0 0h5" stroke="#1a1a1a" stroke-width="1.500"/><rect x="-1.500" y="-1.500" width="3" height="3" fill="#1a1a1a"/></g>
<g transform="translate(1727 538.5)" ><rect x="-5" y="-5" width="11" height="10" fill="#c4c4c4"/><path d="M0 0h5" stroke="#1a1a1a" stroke-width="1.500"/><rect x="-1.500" y="-1.500" width="3" height="3" fill="#1a1a1a"/></g>
<g transform="translate(1681 565.5)" ><path d="M-6.500 6.500v-13h13v6.500h-6.500v6.500z" fill="#c9c9c9"/><path d="M-3 6.500v-9.500h9.500" stroke="#1a1a1a" stroke-width=".9" fill="none"/><rect x="-4.500" y="-4.500" width="3" height="3" fill="#1a1a1a"/></g>
<g transform="translate(1704 565.5)" ><path d="M-6.500 6.500v-6.500a6.500 6.500 0 0 1 6.500-6.500h6.500v6.500h-6.500v6.500z" fill="#c9c9c9"/><path d="M-3 6.500v-9.500h9.500" stroke="#1a1a1a" stroke-width=".9" fill="none"/><rect x="-4.500" y="-4.500" width="3" height="3" fill="#1a1a1a"/></g>
<g transform="translate(1727 565.5)" ><path d="M-6.500 6.500v-8l5-5h8v6.500h-6.500v6.500z" fill="#c9c9c9"/><path d="M-3 6.500v-9.500h9.500" stroke="#1a1a1a" stroke-width=".9" fill="none"/><rect x="-4.500" y="-4.500" width="3" height="3" fill="#1a1a1a"/></g>
<g transform="translate(1680 593.5)" ><path d="M-4.500 -7v11.500h11.500" stroke="#c9c9c9" stroke-width="4.500" fill="none"/><path d="M-4.5 -7v11.5h11.5" stroke="#1a1a1a" stroke-width=".9" fill="none" transform="translate(0 0)"/><rect x="-6" y="3" width="3" height="3" fill="#1a1a1a"/></g>
<g transform="translate(1703 593.5)" ><path d="M-4.500 -7v11.500h11.500" stroke="#c9c9c9" stroke-width="4.500" fill="none"/><path d="M-6.0 -7v13.0h13.0" stroke="#1a1a1a" stroke-width=".9" fill="none" transform="translate(0 1.5)"/><rect x="-7.5" y="4.5" width="3" height="3" fill="#1a1a1a"/></g>
<g transform="translate(1726 593.5)" ><path d="M-4.500 -7v11.500h11.500" stroke="#c9c9c9" stroke-width="4.500" fill="none"/><path d="M-3.0 -7v10.0h10.0" stroke="#1a1a1a" stroke-width=".9" fill="none" transform="translate(0 -1.5)"/><rect x="-4.5" y="1.5" width="3" height="3" fill="#1a1a1a"/></g>
<rect x="1761.500" y="621.500" width="27" height="11" stroke="#7a7a7a" stroke-dasharray="7 3" stroke-width="1.200"/>
<rect x="1800.500" y="621.500" width="27" height="11" stroke="#7a7a7a" stroke-dasharray="5 4" stroke-dashoffset="2" stroke-width="1.200"/>
<path d="M1816 697h11m-3-3l3 3-3 3M1829 704h-11m3-3l-3 3 3 3" stroke="#777" stroke-width="1.300" fill="none"/>
<g stroke="#717171" stroke-width="1.300" fill="none"><rect x="1819.500" y="724.500" width="5" height="7" rx="2.500"/><rect x="1819.500" y="730.500" width="5" height="7" rx="2.500"/><path d="M1815 731h3M1826 731h3M1816 726l2 1M1828 726l-2 1M1816 736l2-1M1828 736l-2-1" stroke-width="1"/></g>
<path d="M1673 757h9M1673 762.500h14m-4-3.500l4 3.500-4 3.500" stroke="#717171" stroke-width="1.300" fill="none"/>
<path d="M1697 757h13M1697 762.500h11m-4-3.500l4 3.500-4 3.500" stroke="#717171" stroke-width="1.300" fill="none"/>
<path d="M1792 789l6 6-6 6zM1805 789l-6 6 6 6z" fill="#606060" stroke="#717171" stroke-width=".8"/><path d="M1798.500 787v16" stroke="#717171" stroke-dasharray="1 1"/>
<path d="M1817 789h12l-6 5zM1817 801h12l-6-5z" fill="#606060" stroke="#717171" stroke-width=".8"/><path d="M1815 795.500h16" stroke="#717171" stroke-dasharray="1 1"/>
</svg>
<div class="abs" style="left:0;top:71px;width:68px;height:12px;background:#2c2c2c;border-bottom:1px solid #222"></div>
<div class="abs" style="left:3px;top:222px;width:28px;height:22px;background:#313131;border:1px solid #2a2a2a"></div>
<div class="hsep" style="left:2px;top:147px;width:60px;border-top-color:#3d3d3d;border-bottom-color:#505050"></div>
<div class="hsep" style="left:2px;top:245px;width:60px;border-top-color:#3d3d3d;border-bottom-color:#505050"></div>
<div class="hsep" style="left:2px;top:320px;width:60px;border-top-color:#3d3d3d;border-bottom-color:#505050"></div>
<div class="hsep" style="left:2px;top:369px;width:60px;border-top-color:#3d3d3d;border-bottom-color:#505050"></div>
<div class="hsep" style="left:2px;top:395px;width:60px;border-top-color:#3d3d3d;border-bottom-color:#505050"></div>
<div class="hsep" style="left:2px;top:445px;width:60px;border-top-color:#3d3d3d;border-bottom-color:#505050"></div>
<div class="abs" style="left:21px;top:468px;width:34px;height:34px;background:#000;border:1px solid #fff;outline:1px solid #222"></div>
<div class="abs" style="left:29px;top:477px;width:18px;height:17px;border:1px solid #fff;background:#525252"></div>
<div class="abs" style="left:2px;top:450px;width:36px;height:35px;background:#fff;border:1px solid #2a2a2a"></div>
<div class="abs" style="left:3px;top:509px;width:59px;height:21px;background:#5c5c5c;border:1px solid #383838"></div>
<div class="abs" style="left:3px;top:509px;width:20px;height:21px;background:#343434;border:1px solid #333"></div>
<div class="abs" style="left:8px;top:513px;width:13px;height:13px;background:#fff;border:1px solid #222"></div>
<div class="abs" style="left:27px;top:513px;width:13px;height:13px;background:linear-gradient(90deg,#fff,#222);border:1px solid #222"></div>
<div class="abs" style="left:45px;top:513px;width:13px;height:13px;background:#fff;border:1px solid #222;overflow:hidden"><div class="abs" style="left:-4px;top:4px;width:20px;height:3px;background:#e0332a;transform:rotate(-45deg)"></div></div>
<div class="abs" style="left:4px;top:535px;width:58px;height:18px;background:#5a5a5a;border:1px solid #333"></div>
<div class="abs" style="left:4px;top:535px;width:19px;height:18px;background:#3a3a3a;border:1px solid #333"></div>
<div class="abs" style="left:70px;top:963px;width:480px;height:18px;background:linear-gradient(#4a4a4a,#424242)"></div>
<div class="inp" style="left:131px;top:964px;width:42px;height:15px;line-height:14px;padding-left:3px;font-size:11px">659,77</div>
<div class="btn" style="left:172px;top:964px;width:16px;height:15px"></div><div class="tri" style="left:176px;top:970px"></div>
<div class="inp" style="left:232px;top:964px;width:42px;height:15px;line-height:14px;padding-left:3px;font-size:11px">1</div>
<div class="btn" style="left:273px;top:964px;width:16px;height:15px"></div><div class="tri" style="left:277px;top:970px"></div>
<div class="vsep" style="left:330px;top:963px;height:18px"></div>
<div class="lbl" style="left:373px;top:967px;font-weight:bold;font-size:10.400px;color:#dcdcdc">Auswahl größer/kleiner</div>
<div class="trir" style="left:538px;top:967px"></div>
<div class="abs" style="left:549px;top:963px;width:1px;height:18px;background:#222"></div>
<div class="tril" style="left:555px;top:967px"></div>
<div class="abs" style="left:1130px;top:964px;width:14px;height:15px;background:#8f8f8f;border:1px solid #555"></div>
<div class="trir" style="left:1887px;top:966px;border-top-width:4.500px;border-bottom-width:4.500px"></div>
<div class="abs" style="left:1899px;top:962px;width:17px;height:16px;background:#4a4a4a;border-left:1px solid #222;border-top:1px solid #222"></div>
<div class="triu" style="left:1902px;top:97px;border-left-width:5px;border-right-width:5px;border-bottom-width:6px"></div>
<div class="tri" style="left:1902px;top:950px;border-left-width:5px;border-right-width:5px;border-top-width:6px"></div>
<div class="abs" style="left:1900px;top:495px;width:15px;height:15px;background:#999;border:1px solid #2a2a2a"></div>
<div class="abs" style="left:0;top:978px;width:1918px;height:3px;background:linear-gradient(#2a2a2a,#1c1c1c 1px)"></div>
<div class="abs" style="left:56px;top:979px;width:1802px;height:2px;background:#646464;border-radius:3px 3px 0 0"></div>
<div class="abs" style="left:1916px;top:2px;width:2px;height:979px;background:linear-gradient(#55527a 0,#4c4a68 90px,#1d1d1d 130px,#1b1b1b 100%)"></div>
<svg class="abs" style="left:0;top:0" width="1918" height="981" viewBox="0 0 1918 981" fill="none">
<path d="M4.300 73.800v5.400l-3.600-2.700zM8.300 73.800v5.400l-3.600-2.700z" fill="#d0d0d0"/>
<path d="M22.500 86v4M24.500 86v4M26.500 86v4M28.500 86v4M30.500 86v4M32.500 86v4M34.500 86v4M36.500 86v4M38.500 86v4M40.500 86v4" stroke="#1a1a1a" stroke-width="1" shape-rendering="crispEdges"/>
<g transform="translate(17 110)"><path d="M-5 -8v15l3.500-3.500 2.500 5.500 2.500-1-2.500-5.500h5z" fill="#2e2e2e" stroke="#d0d0d0" stroke-width="1.200"/></g>
<g transform="translate(47 110)"><path d="M-5 -8v15l3.500-3.500 2.500 5.500 2.500-1-2.500-5.500h5z" fill="#b0b0b0" stroke="#b0b0b0" stroke-width=".6"/></g>
<path d="M59 120v-3.500l-3.500 3.500z" fill="#c6c6c6"/>
<g transform="translate(17 135)"><path d="M-1 -1l8 8" stroke="#bcbcbc" stroke-width="2.200"/><path d="M-4 -8v4M-4 0v4M-9 -3.500h3.500M-2 -3.500h3.500M-7.500 -7l2 2M-.5 -7l-2 2M-7.500 0l2-2M-.5 0l-2-2" stroke="#bcbcbc" stroke-width="1.100"/></g>
<g transform="translate(47 135)"><ellipse cx="0" cy="-2" rx="8" ry="5.500" stroke="#b4b4b4" stroke-width="1.500"/><path d="M-5 2c-3 2-2 5 1 4" stroke="#b4b4b4" stroke-width="1.300"/><path d="M0 -2v10l2.500-2.500 2 4 2-1-2-4h3.500z" fill="#b4b4b4" stroke="#444" stroke-width=".5"/></g>
<g transform="translate(18 163)"><path d="M-8 6l4-11 7-4 5 5-4 7z" fill="#b4b4b4" stroke="#3a3a3a" stroke-width=".6"/><path d="M4 -9l5 5 1.500-2.500-4-4z" fill="#c6c6c6"/><path d="M-8 6l6-6" stroke="#3a3a3a" stroke-width="1"/><circle cx="-1.500" cy="-.5" r="1.300" fill="#3a3a3a"/><path d="M-12 -7h7" stroke="#c6c6c6" stroke-width="1.500"/></g>
<path d="M29 171v-3.500l-3.500 3.500z" fill="#c6c6c6"/>
<g transform="translate(49 163)"><path d="M-8 6l4-11 7-4 5 5-4 7z" fill="#b4b4b4" stroke="#3a3a3a" stroke-width=".6"/><path d="M4 -9l5 5 1.500-2.500-4-4z" fill="#c6c6c6"/><path d="M-8 6l6-6" stroke="#3a3a3a" stroke-width="1"/><circle cx="-1.500" cy="-.5" r="1.300" fill="#3a3a3a"/><path d="M-11 -6c4-4 3 4 0 8s2 5 5 2" stroke="#b4b4b4" stroke-width="1.300" fill="none"/></g>
<g transform="translate(17 185)"><path d="M-5.500 -6.500h11v3h-1l-.8-1.700h-2.500v10.400l1.800.6v.9h-6v-.9l1.800-.6v-10.400h-2.500l-.8 1.700h-1z" fill="#c0c0c0"/></g>
<path d="M29 195v-3.500l-3.500 3.500z" fill="#c6c6c6"/>
<g transform="translate(47 185)"><path d="M-6.500 6.500l13-13" stroke="#b9b9b9" stroke-width="1.500"/></g>
<path d="M59 195v-3.500l-3.500 3.500z" fill="#c6c6c6"/>
<g transform="translate(17 209)"><rect x="-6.500" y="-5.500" width="13" height="11" fill="#777" stroke="#b9b9b9" stroke-width="1"/></g>
<path d="M29 219v-3.500l-3.500 3.500z" fill="#c6c6c6"/>
<g transform="translate(47 209)"><path d="M8 -8l-9 9 2 2 9-9z" fill="#b8b8b8"/><path d="M-2 2c-3 0-4 2-4 4l-2 1c4 2 8 0 8-3z" fill="#aaaaaa"/></g>
<path d="M59 219v-3.500l-3.500 3.500z" fill="#c6c6c6"/>
<g transform="translate(17 233)"><path d="M-8 7l2-5 9-9 3 3-9 9z" fill="#b4b4b4"/><path d="M-4 0l3 3 2-2-3-3z" fill="#7d7d7d"/><path d="M4 -8l2-1 3 3-1 2z" fill="#d0d0d0"/><path d="M-8 7l2-5 3 3z" fill="#f2f2f2"/></g>
<path d="M29 243v-3.500l-3.500 3.500z" fill="#c6c6c6"/>
<g transform="translate(47 233)"><path d="M-8 3l6-7h9l-6 7z" fill="#adadad"/><path d="M-8 3h9v4h-9z" fill="#a2a2a2"/><path d="M1 3l6-7v4l-6 7z" fill="#808080"/></g>
<path d="M59 243v-3.500l-3.500 3.500z" fill="#c6c6c6"/>
<g transform="translate(17 259)"><circle cx="0" cy="0" r="6" stroke="#b9b9b9" stroke-width="1.300" stroke-dasharray="2.500 1.800"/><path d="M-3 -8l5 2-4 3z" fill="#b9b9b9"/></g>
<path d="M29 269v-3.500l-3.500 3.500z" fill="#c6c6c6"/>
<g transform="translate(47 259)"><rect x="-8.500" y="-1.500" width="9" height="8" stroke="#b9b9b9" fill="#555"/><rect x="-3.500" y="-6.500" width="11" height="10" stroke="#b9b9b9"/><path d="M1 -1l4-4m-3 0h3v3" stroke="#b9b9b9" stroke-width="1"/></g>
<path d="M59 269v-3.500l-3.500 3.500z" fill="#c6c6c6"/>
<g transform="translate(17 283)"><path d="M-8 3c3-8 6 0 8-4s5-2 7-5" stroke="#b9b9b9" stroke-width="1.400"/><circle cx="-4" cy="2" r="2" stroke="#b9b9b9" fill="#444"/><path d="M-6 -6l3 5M3 3l4 3" stroke="#b9b9b9"/></g>
<path d="M29 293v-3.500l-3.500 3.500z" fill="#c6c6c6"/>
<g transform="translate(47 283)"><rect x="-4.500" y="-5.500" width="12" height="11" stroke="#b9b9b9" stroke-dasharray="2 2" stroke-width="1.200"/><path d="M-8 -7v10l2.500-2.500 2 4 1.600-.8-2-4h3.400z" fill="#c0c0c0" stroke="#3a3a3a" stroke-width=".5"/></g>
<g transform="translate(17 307)"><circle cx="-3" cy="-2" r="5.500" stroke="#b9b9b9" fill="#6a6a6a"/><circle cx="2" cy="1" r="5.500" stroke="#b9b9b9" fill="none"/><path d="M2 0v9l2.300-2.300 1.800 3.700 1.600-.8-1.800-3.700h3.300z" fill="#b0b0b0" stroke="#3a3a3a" stroke-width=".5"/></g>
<path d="M29 317v-3.500l-3.500 3.500z" fill="#c6c6c6"/>
<g transform="translate(47 307)"><path d="M-7 -8v15h15M-4 -6v10h10M-1 -3v6h6M-7 7l6-4M-4 -6l3 3M6 4l-1-1" stroke="#b9b9b9" stroke-width="1.100"/></g>
<path d="M59 317v-3.500l-3.500 3.500z" fill="#c6c6c6"/>
<g transform="translate(17 333)"><rect x="-8.500" y="-5.500" width="17" height="11" stroke="#b9b9b9" fill="#4a4a4a"/><path d="M-8 -1c5-3 9 3 16 0M-8 2c5 2 9-2 16 1M-3 -5c2 4-2 7 0 11M3 -5c-2 4 2 7 0 11" stroke="#b9b9b9" stroke-width=".9"/></g>
<defs><linearGradient id="tg" x1="0" y1="0" x2="1" y2="0"><stop offset="0" stop-color="#3a3a3a"/><stop offset="1" stop-color="#e0e0e0"/></linearGradient></defs>
<g transform="translate(47 333)"><rect x="-8" y="-6" width="16" height="12" fill="url(#tg)" stroke="#b9b9b9" stroke-width="1"/></g>
<g transform="translate(17 357)"><path d="M-7 8l1-3 7-7 2 2-7 7z" fill="#bcbcbc"/><path d="M1 -4l3-3c2-2 5 1 3 3l-3 3z" fill="#cacaca"/><path d="M0 -5l5 5" stroke="#cacaca" stroke-width="1.600"/></g>
<path d="M29 367v-3.500l-3.500 3.500z" fill="#c6c6c6"/>
<g transform="translate(47 357)"><rect x="-9" y="-8" width="7" height="7" fill="#aaaaaa"/><circle cx="0" cy="-1" r="4.500" fill="#8a8a8a" stroke="#b9b9b9"/><circle cx="4" cy="3" r="4.500" fill="#6a6a6a" stroke="#b9b9b9"/></g>
<g transform="translate(19 383)"><rect x="-4.500" y="-3.500" width="9" height="11" rx="1" fill="#666" stroke="#b9b9b9"/><circle cx="0" cy="2" r="2" stroke="#b9b9b9"/><path d="M-2 -6.500h4v3h-4z" fill="#b9b9b9"/><path d="M-9 -8l1 1M-7 -6l1 1M-9 -5l1 1M-6 -8l1 1" stroke="#b9b9b9"/></g>
<path d="M29 393v-3.500l-3.500 3.500z" fill="#c6c6c6"/>
<g transform="translate(47 383)"><path d="M-8 -8v15h16" stroke="#b9b9b9"/><path d="M-5 7v-7M-1 7v-12M3 7v-9M7 7v-5" stroke="#adadad" stroke-width="2.400"/></g>
<path d="M59 393v-3.500l-3.500 3.500z" fill="#c6c6c6"/>
<g transform="translate(17 409)"><rect x="-5.500" y="-5.500" width="11" height="11" fill="#777" stroke="#b9b9b9"/><path d="M-10 -5.500h3M7 -5.500h3M-10 5.500h3M7 5.500h3M-5.500 -10v3M5.500 -10v3M-5.500 7v3M5.500 7v3" stroke="#b9b9b9" stroke-dasharray="1.500 1"/></g>
<g transform="translate(47 409)"><path d="M-8 7l11-12 5-2-2 6-11 9z" fill="#b9b9b9"/><path d="M-8 7l4-1-2-2z" fill="#888"/></g>
<path d="M59 419v-3.500l-3.500 3.500z" fill="#c6c6c6"/>
<g transform="translate(17 433)"><path d="M-4 8c-2-3-5-6-5-8 1-1 3 0 4 2v-8c1-1 2-1 2.500 0v-2c1-1 2-1 2.500 0v1c1-1 2-1 2.500 0v2c1-1 2-1 2.500 0v8c0 2-1 4-2 5z" fill="#b9b9b9"/></g>
<path d="M29 443v-3.500l-3.500 3.500z" fill="#c6c6c6"/>
<g transform="translate(47 433)"><circle cx="-1.500" cy="-2" r="5.500" fill="#8a8a8a" stroke="#b9b9b9" stroke-width="1.400"/><path d="M2.500 2.500l5.500 5.500" stroke="#b9b9b9" stroke-width="2.600"/></g>
<path d="M47 452.500h6v6M51 456.500l2.200 2.200 2.200-2.200M49 450.300l-2.200 2.200 2.200 2.200" stroke="#dcdcdc" stroke-width="1.100"/>
<g shape-rendering="crispEdges"><rect x="7.500" y="497.500" width="7" height="7" fill="#111" stroke="#e8e8e8"/><rect x="4.500" y="494.500" width="7" height="7" fill="#fff" stroke="#222"/></g>
<circle cx="12" cy="543" r="3.500" fill="#999" stroke="#ddd" stroke-width=".8"/><rect x="13.500" y="544.500" width="5" height="5" fill="#ccc" stroke="#333" stroke-width=".6"/>
<circle cx="32" cy="543" r="4" fill="#888" stroke="#ddd" stroke-width=".8"/><rect x="33.500" y="544.500" width="5" height="5" fill="#666" stroke="#bbb" stroke-width=".6"/>
<circle cx="51" cy="543" r="4" fill="#888" stroke="#ddd" stroke-width=".8"/><path d="M51 543h4.500v4.500h-4.500z" fill="#ddd"/>
<g shape-rendering="crispEdges"><rect x="26.500" y="562.500" width="14" height="10" fill="#6a6a6a" stroke="#d0d0d0"/><rect x="20.500" y="566.500" width="14" height="10" fill="#6a6a6a" stroke="#d0d0d0"/></g>
<g><rect x="77.500" y="965.500" width="18" height="12" rx="2" fill="#555" stroke="#333"/><circle cx="83" cy="971.500" r="2.600" stroke="#e0e0e0" stroke-width="1.600" stroke-dasharray="1.500 1"/><path d="M88 970h5l-2-2M94 973.500h-5l2 2" stroke="#e0e0e0" stroke-width="1.100"/></g>
<path d="M108.500 969v6.500h8v-3" stroke="#dcdcdc" stroke-width="1.300"/><path d="M111 972c0-3 2-4.500 5-4.500v-2l4 3.500-4 3.500v-2c-2 0-4 .5-5 1.500z" fill="#dcdcdc"/>
<path d="M198.500 968v7" stroke="#707070" stroke-width="1.300"/><path d="M205 968v7l-5-3.500z" fill="#707070"/><path d="M221 968v7l-5-3.500z" fill="#707070"/><path d="M298 968v7l5-3.500z" fill="#707070"/><path d="M314 968v7l5-3.500z" fill="#707070"/><path d="M320.500 968v7" stroke="#707070" stroke-width="1.300"/>
<path d="M1909 2H1918V9H1916A7 7 0 0 0 1909 2Z" fill="#55527a"/>
</svg>
</div>
</body>
</html>
